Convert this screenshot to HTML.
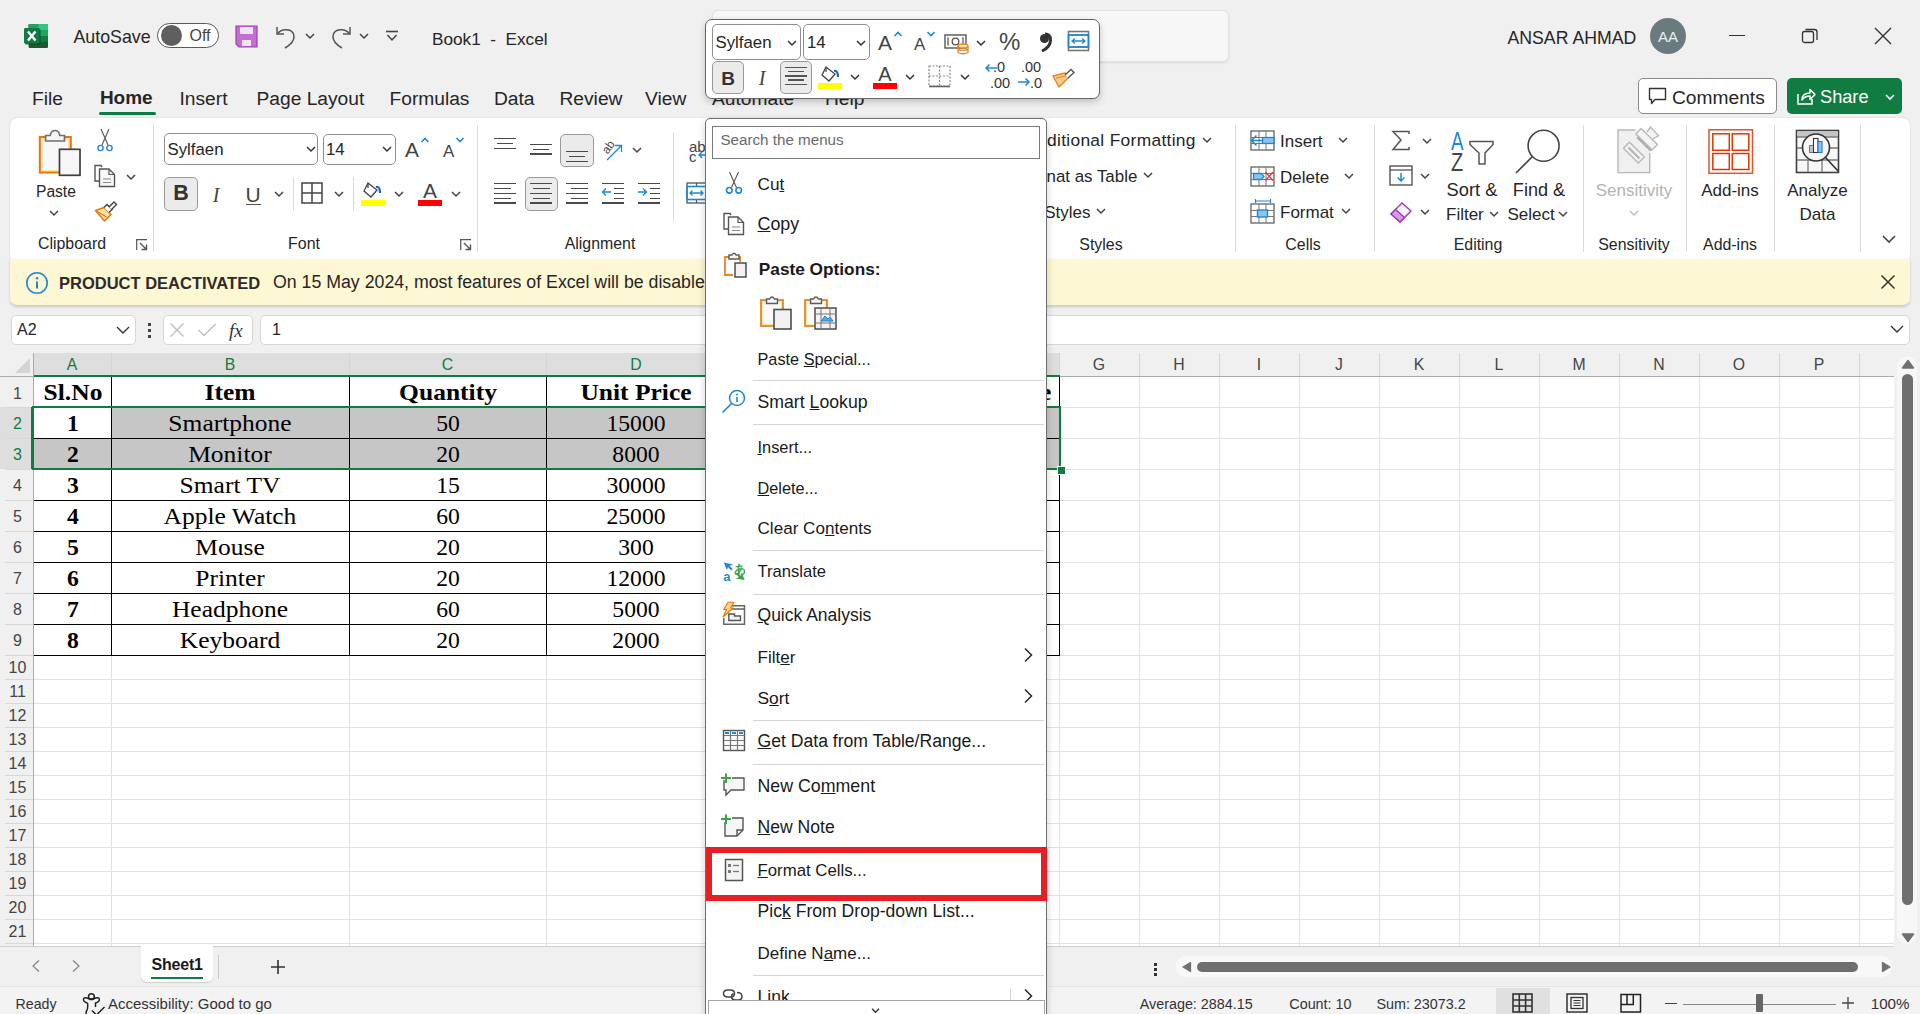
<!DOCTYPE html><html><head><meta charset="utf-8"><style>
html,body{margin:0;padding:0;width:1920px;height:1014px;overflow:hidden;background:#f0f0f0;}
body{position:relative;font-family:"Liberation Sans",sans-serif;}
</style></head><body><div style="position:absolute;left:0px;top:0px;width:1920px;height:1014px;background:#f0f0f0;"></div>
<svg style="position:absolute;left:24px;top:24px;" width="25" height="25" viewBox="0 0 25 25" fill="none">
      <rect x="4.6" y="0" width="19.4" height="24" rx="1.2" fill="#185c37"/>
      <rect x="4.6" y="0" width="19.4" height="6" fill="#21a366"/>
      <rect x="14.4" y="0" width="9.6" height="6" fill="#33c481"/>
      <rect x="4.6" y="6" width="19.4" height="6" fill="#21a366"/>
      <rect x="4.6" y="12" width="19.4" height="6" fill="#107c41"/>
      <rect x="1" y="5" width="15.5" height="15.5" rx="1.3" fill="#0b3d22" opacity="0.75"/>
      <rect x="0" y="4" width="15.5" height="15.5" rx="1.3" fill="#107c41"/>
      <path d="M4 7.5 L11.5 16.5 M11.5 7.5 L4 16.5" stroke="#fff" stroke-width="2.4"/>
    </svg>
<div style="position:absolute;top:28.93px;font-size:17.8px;line-height:1;color:#262626;font-weight:400;font-family:'Liberation Sans', sans-serif;white-space:pre;left:73.5px;">AutoSave</div>
<div style="position:absolute;left:157px;top:23px;width:62px;height:25px;box-sizing:border-box;border:1.3px solid #5a5a5a;border-radius:13px;background:#fff;"></div>
<div style="position:absolute;left:161px;top:25px;width:21px;height:21px;border-radius:50%;background:#5f5f5f;"></div>
<div style="position:absolute;top:28.16px;font-size:16px;line-height:1;color:#444;font-weight:400;font-family:'Liberation Sans', sans-serif;white-space:pre;left:189.5px;">Off</div>
<svg style="position:absolute;left:235px;top:25px;" width="24" height="23" viewBox="0 0 24 23" fill="none">
      <path d="M1 1 H22 V22 H4 L1 19 Z" fill="#c26fd3" stroke="#9c3fb0" stroke-width="1.2"/>
      <rect x="5" y="2" width="13" height="7" fill="#f3e1f7"/>
      <rect x="7" y="15" width="9" height="6" fill="#f3e1f7"/>
    </svg>
<svg style="position:absolute;left:274px;top:24px;" width="24" height="25" viewBox="0 0 24 25" fill="none"><path d="M3 3 V10 H10" stroke="#555" stroke-width="1.5"/><path d="M3.5 10 C7 4 19 4 20 12 C20.5 17 16 21 11 24" stroke="#555" stroke-width="1.5"/></svg>
<svg style="position:absolute;left:304px;top:32px;" width="12" height="8" viewBox="0 0 12 8" fill="none"><path d="M2 2.0 L6 6.0 L10 2.0" stroke="#444" stroke-width="1.5"/></svg>
<svg style="position:absolute;left:329px;top:24px;" width="24" height="25" viewBox="0 0 24 25" fill="none"><path d="M21 3 V10 H14" stroke="#555" stroke-width="1.5"/><path d="M20.5 10 C17 4 5 4 4 12 C3.5 17 8 21 13 24" stroke="#555" stroke-width="1.5"/></svg>
<svg style="position:absolute;left:358px;top:32px;" width="12" height="8" viewBox="0 0 12 8" fill="none"><path d="M2 2.0 L6 6.0 L10 2.0" stroke="#444" stroke-width="1.5"/></svg>
<svg style="position:absolute;left:385px;top:30px;" width="14" height="13" viewBox="0 0 14 13" fill="none"><path d="M1 1.5 H13" stroke="#444" stroke-width="1.6"/><path d="M2.5 5 L7 10 L11.5 5" stroke="#444" stroke-width="1.5"/></svg>
<div style="position:absolute;top:30.64px;font-size:17.2px;line-height:1;color:#262626;font-weight:400;font-family:'Liberation Sans', sans-serif;white-space:pre;left:432px;">Book1  -  Excel</div>
<div style="position:absolute;top:29.52px;font-size:17.7px;line-height:1;color:#262626;font-weight:400;font-family:'Liberation Sans', sans-serif;white-space:pre;left:1507.5px;">ANSAR AHMAD</div>
<div style="position:absolute;left:1650px;top:18px;width:36px;height:36px;border-radius:50%;background:#6a7b80;"></div>
<div style="position:absolute;top:29.30px;font-size:15px;line-height:1;color:#e8eef0;font-weight:400;font-family:'Liberation Sans', sans-serif;white-space:pre;left:1650.00px;width:36px;text-align:center;">AA</div>
<div style="position:absolute;left:1729px;top:35px;width:16px;height:1.3px;background:#333;"></div>
<svg style="position:absolute;left:1800px;top:26px;" width="20" height="20" viewBox="0 0 20 20" fill="none"><rect x="2.5" y="5.5" width="11" height="11" rx="2" stroke="#333" stroke-width="1.3"/><path d="M5.5 3.5 H14.5 Q17 3.5 17 6 V14" stroke="#333" stroke-width="1.3"/></svg>
<svg style="position:absolute;left:1873px;top:26px;" width="20" height="20" viewBox="0 0 20 20" fill="none"><path d="M2 2 L18 18 M18 2 L2 18" stroke="#333" stroke-width="1.4"/></svg>
<div style="position:absolute;top:89.35px;font-size:19.2px;line-height:1;color:#262626;font-weight:400;font-family:'Liberation Sans', sans-serif;white-space:pre;left:32px;">File</div>
<div style="position:absolute;top:89.35px;font-size:19.2px;line-height:1;color:#262626;font-weight:400;font-family:'Liberation Sans', sans-serif;white-space:pre;left:179.5px;">Insert</div>
<div style="position:absolute;top:89.35px;font-size:19.2px;line-height:1;color:#262626;font-weight:400;font-family:'Liberation Sans', sans-serif;white-space:pre;left:256.5px;">Page Layout</div>
<div style="position:absolute;top:89.35px;font-size:19.2px;line-height:1;color:#262626;font-weight:400;font-family:'Liberation Sans', sans-serif;white-space:pre;left:389.5px;">Formulas</div>
<div style="position:absolute;top:89.35px;font-size:19.2px;line-height:1;color:#262626;font-weight:400;font-family:'Liberation Sans', sans-serif;white-space:pre;left:494px;">Data</div>
<div style="position:absolute;top:89.35px;font-size:19.2px;line-height:1;color:#262626;font-weight:400;font-family:'Liberation Sans', sans-serif;white-space:pre;left:559.5px;">Review</div>
<div style="position:absolute;top:89.35px;font-size:19.2px;line-height:1;color:#262626;font-weight:400;font-family:'Liberation Sans', sans-serif;white-space:pre;left:645px;">View</div>
<div style="position:absolute;top:89.35px;font-size:19.2px;line-height:1;color:#262626;font-weight:400;font-family:'Liberation Sans', sans-serif;white-space:pre;left:712px;">Automate</div>
<div style="position:absolute;top:89.35px;font-size:19.2px;line-height:1;color:#262626;font-weight:400;font-family:'Liberation Sans', sans-serif;white-space:pre;left:825px;">Help</div>
<div style="position:absolute;top:88.42px;font-size:19px;line-height:1;color:#262626;font-weight:700;font-family:'Liberation Sans', sans-serif;white-space:pre;letter-spacing:-0.1px;left:100px;">Home</div>
<div style="position:absolute;left:99px;top:112px;width:57px;height:3px;background:#107c41;border-radius:2px;"></div>
<div style="position:absolute;left:1638px;top:78px;width:139px;height:36px;box-sizing:border-box;border:1px solid #8a8a8a;border-radius:5px;background:#fff;"></div>
<svg style="position:absolute;left:1648px;top:87px;" width="20" height="18" viewBox="0 0 20 18" fill="none"><path d="M1.5 1.5 H17.5 V12.5 H7 L3.5 16.5 V12.5 H1.5 Z" stroke="#333" stroke-width="1.4" stroke-linejoin="round"/></svg>
<div style="position:absolute;top:87.95px;font-size:19.2px;line-height:1;color:#262626;font-weight:400;font-family:'Liberation Sans', sans-serif;white-space:pre;left:1672px;">Comments</div>
<div style="position:absolute;left:1787px;top:78px;width:115px;height:36px;border-radius:5px;background:#107c41;"></div>
<svg style="position:absolute;left:1796px;top:86px;" width="20" height="20" viewBox="0 0 20 20" fill="none"><path d="M2 8 V18 H16 V13" stroke="#fff" stroke-width="1.5"/><path d="M6 14 C6 9 9 7 14 7 V3.5 L19 8.5 L14 13.5 V10 C10 10 8 11 6 14 Z" stroke="#fff" stroke-width="1.5" stroke-linejoin="round"/></svg>
<div style="position:absolute;top:88.09px;font-size:18.2px;line-height:1;color:#ffffff;font-weight:400;font-family:'Liberation Sans', sans-serif;white-space:pre;left:1820px;">Share</div>
<svg style="position:absolute;left:1884px;top:93px;" width="12" height="8" viewBox="0 0 12 8" fill="none"><path d="M2 2.0 L6 6.0 L10 2.0" stroke="#fff" stroke-width="1.6"/></svg>
<div style="position:absolute;left:10px;top:118px;width:1900px;height:145px;background:#fff;border-radius:8px;box-shadow:0 0.5px 1.5px rgba(0,0,0,0.18);"></div>
<div style="position:absolute;left:10px;top:259px;width:1900px;height:46px;background:#fdf7d4;border-radius:0 0 7px 7px;box-shadow:0 1.5px 3px rgba(0,0,0,0.16);"></div>
<svg style="position:absolute;left:36px;top:128px;" width="46" height="50" viewBox="0 0 46 50" fill="none"><rect x="3.8" y="9" width="31" height="35.5" fill="#fbe3a6" stroke="#e8760e" stroke-width="2"/>
      <rect x="6.5" y="11.5" width="25.5" height="30.5" fill="#f8f8f8"/>
      <path d="M9.6 13 V7.5 H14.2 Q15 2.5 19 2.5 Q23 2.5 23.8 7.5 H28.5 V13 Z" fill="#f4f4f4" stroke="#707070" stroke-width="1.7"/>
      <rect x="23.5" y="21.3" width="20.5" height="26" fill="#f7f7f7" stroke="#404040" stroke-width="1.7"/></svg>
<div style="position:absolute;top:183.79px;font-size:15.6px;line-height:1;color:#262626;font-weight:400;font-family:'Liberation Sans', sans-serif;white-space:pre;left:36px;">Paste</div>
<svg style="position:absolute;left:48px;top:209px;" width="12" height="8" viewBox="0 0 12 8" fill="none"><path d="M2 2.0 L6 6.0 L10 2.0" stroke="#444" stroke-width="1.5"/></svg>
<svg style="position:absolute;left:96px;top:128px;" width="18" height="25" viewBox="0 0 18 25" fill="none"><path d="M5 1 L12 17 M13 1 L6 17" stroke="#555" stroke-width="1.1"/>
      <circle cx="4.5" cy="20" r="2.6" stroke="#1e88d4" stroke-width="1.4"/><circle cx="13.5" cy="20" r="2.6" stroke="#1e88d4" stroke-width="1.4"/></svg>
<svg style="position:absolute;left:93px;top:164px;" width="24" height="24" viewBox="0 0 24 24" fill="none"><path d="M9 3 L8 1.5 H2 V17 H6" stroke="#555" stroke-width="1.4"/>
      <path d="M6.5 5 H16 L21.5 10.5 V22.5 H6.5 Z" fill="#fafafa" stroke="#555" stroke-width="1.4"/>
      <path d="M16 5 V10.5 H21.5" stroke="#555" stroke-width="1.2"/>
      <path d="M10 15 H18 M10 18.5 H18" stroke="#888" stroke-width="1.2"/></svg>
<svg style="position:absolute;left:125px;top:173px;" width="12" height="8" viewBox="0 0 12 8" fill="none"><path d="M2 2.0 L6 6.0 L10 2.0" stroke="#444" stroke-width="1.5"/></svg>
<svg style="position:absolute;left:94px;top:201px;" width="24" height="22" viewBox="0 0 24 22" fill="none"><path d="M1.5 9.5 L10 6.5 L17 13.5 L10.5 20 Z" fill="#fbe3a6" stroke="#e8760e" stroke-width="1.5" stroke-linejoin="round"/>
      <path d="M1.5 9.5 L12.5 16" stroke="#e8760e" stroke-width="1.2"/>
      <path d="M10 6.5 L13 3.5 L18 8.5 L15 11.5" fill="#fff" stroke="#404040" stroke-width="1.4"/>
      <path d="M15 6 L20 1 L22.5 3.5 L17.5 8.5" fill="#fff" stroke="#404040" stroke-width="1.4"/></svg>
<div style="position:absolute;top:236.24px;font-size:15.9px;line-height:1;color:#262626;font-weight:400;font-family:'Liberation Sans', sans-serif;white-space:pre;left:38px;">Clipboard</div>
<svg style="position:absolute;left:136px;top:239px;" width="12" height="12" viewBox="0 0 12 12" fill="none"><path d="M0.7 11 V0.7 H11" stroke="#555" stroke-width="1.2"/><path d="M4 4 L10.5 10.5 M10.5 5.5 V10.5 H5.5" stroke="#555" stroke-width="1.4"/></svg>
<div style="position:absolute;left:153px;top:125px;width:1px;height:127px;background:#dcdcdc;"></div>
<div style="position:absolute;left:164px;top:133px;width:154px;height:32px;box-sizing:border-box;border:1px solid #8f8f8f;border-radius:5px;background:#fff;"></div>
<div style="position:absolute;top:141.58px;font-size:16.8px;line-height:1;color:#262626;font-weight:400;font-family:'Liberation Sans', sans-serif;white-space:pre;left:167.5px;">Sylfaen</div>
<svg style="position:absolute;left:304.5px;top:145px;" width="12" height="8" viewBox="0 0 12 8" fill="none"><path d="M2 2.0 L6 6.0 L10 2.0" stroke="#333" stroke-width="1.5"/></svg>
<div style="position:absolute;left:322.5px;top:133.5px;width:73px;height:31.5px;box-sizing:border-box;border:1px solid #8f8f8f;border-radius:5px;background:#fff;"></div>
<div style="position:absolute;top:141.58px;font-size:16.8px;line-height:1;color:#262626;font-weight:400;font-family:'Liberation Sans', sans-serif;white-space:pre;left:326px;">14</div>
<svg style="position:absolute;left:380.5px;top:145px;" width="12" height="8" viewBox="0 0 12 8" fill="none"><path d="M2 2.0 L6 6.0 L10 2.0" stroke="#333" stroke-width="1.5"/></svg>
<div style="position:absolute;top:139.22px;font-size:21px;line-height:1;color:#444;font-weight:400;font-family:'Liberation Sans', sans-serif;white-space:pre;left:405px;">A</div>
<svg style="position:absolute;left:420px;top:136px;" width="10" height="8" viewBox="0 0 10 8" fill="none"><path d="M1.5 6 L5 2.5 L8.5 6" stroke="#1e88d4" stroke-width="1.6"/></svg>
<div style="position:absolute;top:142.61px;font-size:17px;line-height:1;color:#444;font-weight:400;font-family:'Liberation Sans', sans-serif;white-space:pre;left:443px;">A</div>
<svg style="position:absolute;left:455px;top:136px;" width="10" height="8" viewBox="0 0 10 8" fill="none"><path d="M1.5 2 L5 5.5 L8.5 2" stroke="#1e88d4" stroke-width="1.6"/></svg>
<div style="position:absolute;left:164px;top:177px;width:34px;height:33.5px;box-sizing:border-box;border:1px solid #9a9a9a;border-radius:5px;background:#ebebeb;"></div>
<div style="position:absolute;top:183.30px;font-size:21.5px;line-height:1;color:#333;font-weight:700;font-family:'Liberation Sans', sans-serif;white-space:pre;left:164.00px;width:34px;text-align:center;">B</div>
<div style="position:absolute;top:185.25px;font-size:20px;line-height:1;color:#444;font-weight:400;font-family:'Liberation Serif', serif;white-space:pre;font-style:italic;left:206.00px;width:20px;text-align:center;">I</div>
<div style="position:absolute;top:184.22px;font-size:21px;line-height:1;color:#444;font-weight:400;font-family:'Liberation Sans', sans-serif;white-space:pre;left:243.00px;width:20px;text-align:center;">U</div>
<div style="position:absolute;left:246px;top:203.8px;width:14.5px;height:1.5px;background:#555;"></div>
<svg style="position:absolute;left:273px;top:190px;" width="12" height="8" viewBox="0 0 12 8" fill="none"><path d="M2 2.0 L6 6.0 L10 2.0" stroke="#444" stroke-width="1.5"/></svg>
<div style="position:absolute;left:293px;top:177px;width:1px;height:34px;background:#dcdcdc;"></div>
<svg style="position:absolute;left:301px;top:182px;" width="22" height="23" viewBox="0 0 22 23" fill="none"><rect x="1" y="1" width="20" height="20" stroke="#444" stroke-width="1.5"/><path d="M11 1 V21 M1 11 H21" stroke="#444" stroke-width="1.5"/></svg>
<svg style="position:absolute;left:333px;top:190px;" width="12" height="8" viewBox="0 0 12 8" fill="none"><path d="M2 2.0 L6 6.0 L10 2.0" stroke="#444" stroke-width="1.5"/></svg>
<div style="position:absolute;left:353px;top:177px;width:1px;height:34px;background:#dcdcdc;"></div>
<svg style="position:absolute;left:360px;top:180px;" width="26" height="26" viewBox="0 0 26 26" fill="none"><path d="M8 3 L4 11 L11 17 L17 10 Z" fill="#fff" stroke="#444" stroke-width="1.3"/>
      <path d="M8 3 V8" stroke="#444" stroke-width="1.3"/><path d="M16 7 Q20 6 20 13" stroke="#1e66b8" stroke-width="2.2"/></svg>
<div style="position:absolute;left:361px;top:200px;width:24px;height:5.5px;background:#ffff00;"></div>
<svg style="position:absolute;left:393px;top:190px;" width="12" height="8" viewBox="0 0 12 8" fill="none"><path d="M2 2.0 L6 6.0 L10 2.0" stroke="#444" stroke-width="1.5"/></svg>
<div style="position:absolute;top:179.72px;font-size:21px;line-height:1;color:#444;font-weight:400;font-family:'Liberation Sans', sans-serif;white-space:pre;left:418.00px;width:24px;text-align:center;">A</div>
<div style="position:absolute;left:418px;top:200px;width:24px;height:5.5px;background:#ff0000;"></div>
<svg style="position:absolute;left:450px;top:190px;" width="12" height="8" viewBox="0 0 12 8" fill="none"><path d="M2 2.0 L6 6.0 L10 2.0" stroke="#444" stroke-width="1.5"/></svg>
<div style="position:absolute;top:236.04px;font-size:15.9px;line-height:1;color:#262626;font-weight:400;font-family:'Liberation Sans', sans-serif;white-space:pre;left:274.00px;width:60px;text-align:center;">Font</div>
<svg style="position:absolute;left:460px;top:239px;" width="12" height="12" viewBox="0 0 12 12" fill="none"><path d="M0.7 11 V0.7 H11" stroke="#555" stroke-width="1.2"/><path d="M4 4 L10.5 10.5 M10.5 5.5 V10.5 H5.5" stroke="#555" stroke-width="1.4"/></svg>
<div style="position:absolute;left:477px;top:125px;width:1px;height:127px;background:#dcdcdc;"></div>
<div style="position:absolute;left:494px;top:138px;width:22px;height:1.3px;background:#4a4a4a;"></div>
<div style="position:absolute;left:497px;top:142.8px;width:16px;height:1.3px;background:#4a4a4a;"></div>
<div style="position:absolute;left:494px;top:147.6px;width:22px;height:1.3px;background:#4a4a4a;"></div>
<div style="position:absolute;left:530px;top:143.8px;width:22px;height:1.3px;background:#4a4a4a;"></div>
<div style="position:absolute;left:533px;top:148.60000000000002px;width:16px;height:1.3px;background:#4a4a4a;"></div>
<div style="position:absolute;left:530px;top:153.4px;width:22px;height:1.3px;background:#4a4a4a;"></div>
<div style="position:absolute;left:560px;top:133.5px;width:34px;height:33px;box-sizing:border-box;border:1px solid #9a9a9a;border-radius:5px;background:#ebebeb;"></div>
<div style="position:absolute;left:566px;top:151.2px;width:22px;height:1.3px;background:#4a4a4a;"></div>
<div style="position:absolute;left:569px;top:156.0px;width:16px;height:1.3px;background:#4a4a4a;"></div>
<div style="position:absolute;left:566px;top:160.79999999999998px;width:22px;height:1.3px;background:#4a4a4a;"></div>
<svg style="position:absolute;left:601px;top:136px;" width="25" height="26" viewBox="0 0 25 26" fill="none"><text x="0" y="14" font-family="Liberation Sans" font-size="12" fill="#444" transform="rotate(-55 8 10)">ab</text>
      <path d="M6 24 L20 10 M14 9.5 H20.5 V16" stroke="#1e88d4" stroke-width="1.3"/></svg>
<svg style="position:absolute;left:631px;top:146px;" width="12" height="8" viewBox="0 0 12 8" fill="none"><path d="M2 2.0 L6 6.0 L10 2.0" stroke="#444" stroke-width="1.5"/></svg>
<div style="position:absolute;left:494px;top:183.2px;width:22px;height:1.3px;background:#4a4a4a;"></div>
<div style="position:absolute;left:494px;top:188.0px;width:17px;height:1.3px;background:#4a4a4a;"></div>
<div style="position:absolute;left:494px;top:192.79999999999998px;width:22px;height:1.3px;background:#4a4a4a;"></div>
<div style="position:absolute;left:494px;top:197.6px;width:17px;height:1.3px;background:#4a4a4a;"></div>
<div style="position:absolute;left:494px;top:202.39999999999998px;width:22px;height:1.3px;background:#4a4a4a;"></div>
<div style="position:absolute;left:524.5px;top:177px;width:33px;height:33.5px;box-sizing:border-box;border:1px solid #9a9a9a;border-radius:5px;background:#ebebeb;"></div>
<div style="position:absolute;left:530px;top:183.2px;width:22px;height:1.3px;background:#4a4a4a;"></div>
<div style="position:absolute;left:532.5px;top:188.0px;width:17px;height:1.3px;background:#4a4a4a;"></div>
<div style="position:absolute;left:530px;top:192.79999999999998px;width:22px;height:1.3px;background:#4a4a4a;"></div>
<div style="position:absolute;left:532.5px;top:197.6px;width:17px;height:1.3px;background:#4a4a4a;"></div>
<div style="position:absolute;left:530px;top:202.39999999999998px;width:22px;height:1.3px;background:#4a4a4a;"></div>
<div style="position:absolute;left:566px;top:183.2px;width:22px;height:1.3px;background:#4a4a4a;"></div>
<div style="position:absolute;left:571px;top:188.0px;width:17px;height:1.3px;background:#4a4a4a;"></div>
<div style="position:absolute;left:566px;top:192.79999999999998px;width:22px;height:1.3px;background:#4a4a4a;"></div>
<div style="position:absolute;left:571px;top:197.6px;width:17px;height:1.3px;background:#4a4a4a;"></div>
<div style="position:absolute;left:566px;top:202.39999999999998px;width:22px;height:1.3px;background:#4a4a4a;"></div>
<div style="position:absolute;left:602px;top:183.2px;width:22px;height:1.3px;background:#4a4a4a;"></div>
<div style="position:absolute;left:614px;top:188.0px;width:10px;height:1.3px;background:#4a4a4a;"></div>
<div style="position:absolute;left:614px;top:192.79999999999998px;width:10px;height:1.3px;background:#4a4a4a;"></div>
<div style="position:absolute;left:614px;top:197.6px;width:10px;height:1.3px;background:#4a4a4a;"></div>
<div style="position:absolute;left:602px;top:202.39999999999998px;width:22px;height:1.3px;background:#4a4a4a;"></div>
<svg style="position:absolute;left:601px;top:186px;" width="11" height="12" viewBox="0 0 11 12" fill="none"><path d="M10 6 H1.5 M5 2.5 L1.5 6 L5 9.5" stroke="#1e88d4" stroke-width="1.4"/></svg>
<div style="position:absolute;left:638px;top:183.2px;width:22px;height:1.3px;background:#4a4a4a;"></div>
<div style="position:absolute;left:650px;top:188.0px;width:10px;height:1.3px;background:#4a4a4a;"></div>
<div style="position:absolute;left:650px;top:192.79999999999998px;width:10px;height:1.3px;background:#4a4a4a;"></div>
<div style="position:absolute;left:650px;top:197.6px;width:10px;height:1.3px;background:#4a4a4a;"></div>
<div style="position:absolute;left:638px;top:202.39999999999998px;width:22px;height:1.3px;background:#4a4a4a;"></div>
<svg style="position:absolute;left:637px;top:186px;" width="11" height="12" viewBox="0 0 11 12" fill="none"><path d="M1 6 H9.5 M6 2.5 L9.5 6 L6 9.5" stroke="#1e88d4" stroke-width="1.4"/></svg>
<div style="position:absolute;left:673px;top:132px;width:1px;height:90px;background:#dcdcdc;"></div>
<div style="position:absolute;top:138.80px;font-size:15px;line-height:1;color:#444;font-weight:400;font-family:'Liberation Sans', sans-serif;white-space:pre;left:689px;">ab</div>
<div style="position:absolute;top:148.80px;font-size:15px;line-height:1;color:#444;font-weight:400;font-family:'Liberation Sans', sans-serif;white-space:pre;left:689px;">c</div>
<svg style="position:absolute;left:697px;top:150px;" width="12" height="10" viewBox="0 0 12 10" fill="none"><path d="M11 5 H2 M5 2 L2 5 L5 8" stroke="#1e88d4" stroke-width="1.3"/></svg>
<svg style="position:absolute;left:686px;top:182px;" width="22" height="23" viewBox="0 0 22 23" fill="none"><rect x="1" y="1" width="22" height="20" stroke="#555" stroke-width="1.3"/>
      <path d="M10.5 1 V4 M10.5 18 V21" stroke="#555" stroke-width="1.2"/>
      <rect x="1" y="4.5" width="22" height="13" stroke="#1e88d4" stroke-width="1.6"/>
      <path d="M4 11 H17 M6.5 8.5 L4 11 L6.5 13.5 M14.5 8.5 L17 11 L14.5 13.5" stroke="#1e88d4" stroke-width="1.3"/></svg>
<div style="position:absolute;top:236.04px;font-size:15.9px;line-height:1;color:#262626;font-weight:400;font-family:'Liberation Sans', sans-serif;white-space:pre;left:555.00px;width:90px;text-align:center;">Alignment</div>
<div style="position:absolute;top:132.27px;font-size:17.4px;line-height:1;color:#262626;font-weight:400;font-family:'Liberation Sans', sans-serif;white-space:pre;letter-spacing:0.3px;left:1047px;">ditional Formatting</div>
<svg style="position:absolute;left:1201px;top:136px;" width="12" height="8" viewBox="0 0 12 8" fill="none"><path d="M2 2.0 L6 6.0 L10 2.0" stroke="#444" stroke-width="1.5"/></svg>
<div style="position:absolute;top:168.59px;font-size:16.9px;line-height:1;color:#262626;font-weight:400;font-family:'Liberation Sans', sans-serif;white-space:pre;left:1046.5px;">nat as Table</div>
<svg style="position:absolute;left:1141.5px;top:171px;" width="12" height="8" viewBox="0 0 12 8" fill="none"><path d="M2 2.0 L6 6.0 L10 2.0" stroke="#444" stroke-width="1.5"/></svg>
<div style="position:absolute;top:204.41px;font-size:17px;line-height:1;color:#262626;font-weight:400;font-family:'Liberation Sans', sans-serif;white-space:pre;left:890.50px;width:200px;text-align:right;">Cell Styles</div>
<svg style="position:absolute;left:1095px;top:207px;" width="12" height="8" viewBox="0 0 12 8" fill="none"><path d="M2 2.0 L6 6.0 L10 2.0" stroke="#444" stroke-width="1.5"/></svg>
<div style="position:absolute;top:236.84px;font-size:15.9px;line-height:1;color:#262626;font-weight:400;font-family:'Liberation Sans', sans-serif;white-space:pre;left:1071.00px;width:60px;text-align:center;">Styles</div>
<div style="position:absolute;left:1234.7px;top:125px;width:1px;height:127px;background:#dcdcdc;"></div>
<svg style="position:absolute;left:1250px;top:130px;" width="25" height="21" viewBox="0 0 25 21" fill="none"><rect x="1" y="1" width="23" height="19" stroke="#555" stroke-width="1.2"/><path d="M9 1 V20 M16 1 V20 M1 7.5 H24 M1 13.5 H24" stroke="#777" stroke-width="1"/><rect x="12.5" y="7.5" width="11.5" height="6" fill="#8cc4f0" stroke="#1e88d4" stroke-width="1.3"/><path d="M1.5 10.5 H13 M6.5 5.5 L1.5 10.5 L6.5 15.5" stroke="#1e88d4" stroke-width="1.5"/></svg>
<div style="position:absolute;top:132.61px;font-size:17px;line-height:1;color:#262626;font-weight:400;font-family:'Liberation Sans', sans-serif;white-space:pre;left:1280px;">Insert</div>
<svg style="position:absolute;left:1337px;top:136px;" width="12" height="8" viewBox="0 0 12 8" fill="none"><path d="M2 2.0 L6 6.0 L10 2.0" stroke="#444" stroke-width="1.5"/></svg>
<svg style="position:absolute;left:1250px;top:165.5px;" width="25" height="21" viewBox="0 0 25 21" fill="none"><rect x="1" y="1" width="23" height="19" stroke="#555" stroke-width="1.2"/><path d="M9 1 V20 M16 1 V20 M1 7.5 H24 M1 13.5 H24" stroke="#777" stroke-width="1"/><path d="M3.5 7.5 H11.5 L14 10.5 L11.5 13.5 H3.5 Z" fill="#8cc4f0" stroke="#1e88d4" stroke-width="1.3"/><path d="M15.5 6 L23 14.5 M23 6 L15.5 14.5" stroke="#e8362b" stroke-width="1.3"/></svg>
<div style="position:absolute;top:168.51px;font-size:17px;line-height:1;color:#262626;font-weight:400;font-family:'Liberation Sans', sans-serif;white-space:pre;left:1280px;">Delete</div>
<svg style="position:absolute;left:1343px;top:172px;" width="12" height="8" viewBox="0 0 12 8" fill="none"><path d="M2 2.0 L6 6.0 L10 2.0" stroke="#444" stroke-width="1.5"/></svg>
<svg style="position:absolute;left:1250px;top:202.5px;" width="25" height="21" viewBox="0 0 25 21" fill="none"><rect x="1" y="1" width="23" height="19" stroke="#555" stroke-width="1.2"/><path d="M9 1 V20 M16 1 V20 M1 7.5 H24 M1 13.5 H24" stroke="#777" stroke-width="1"/><rect x="7.5" y="7" width="10" height="7" fill="#8cc4f0" stroke="#1e88d4" stroke-width="1.4"/></svg>
<svg style="position:absolute;left:1254px;top:199px;" width="18" height="5" viewBox="0 0 18 5" fill="none"><path d="M1 2 H17 M1.5 0 V4 M16.5 0 V4" stroke="#1e88d4" stroke-width="1.2"/></svg>
<div style="position:absolute;top:204.41px;font-size:17px;line-height:1;color:#262626;font-weight:400;font-family:'Liberation Sans', sans-serif;white-space:pre;left:1280px;">Format</div>
<svg style="position:absolute;left:1340px;top:207px;" width="12" height="8" viewBox="0 0 12 8" fill="none"><path d="M2 2.0 L6 6.0 L10 2.0" stroke="#444" stroke-width="1.5"/></svg>
<div style="position:absolute;top:236.84px;font-size:15.9px;line-height:1;color:#262626;font-weight:400;font-family:'Liberation Sans', sans-serif;white-space:pre;left:1273.00px;width:60px;text-align:center;">Cells</div>
<div style="position:absolute;left:1373.6px;top:125px;width:1px;height:127px;background:#dcdcdc;"></div>
<svg style="position:absolute;left:1391px;top:130px;" width="20" height="21" viewBox="0 0 20 21" fill="none"><path d="M18 4 V1.5 H2 L10 10 L2 19.5 H18 V17" stroke="#555" stroke-width="1.5"/></svg>
<svg style="position:absolute;left:1421px;top:137px;" width="12" height="8" viewBox="0 0 12 8" fill="none"><path d="M2 2.0 L6 6.0 L10 2.0" stroke="#444" stroke-width="1.5"/></svg>
<svg style="position:absolute;left:1389px;top:165px;" width="24" height="22" viewBox="0 0 24 22" fill="none"><rect x="1" y="1" width="22" height="19" stroke="#555" stroke-width="1.4"/><path d="M1 5 H23" stroke="#555" stroke-width="1.3"/><path d="M12 8 V16 M8.5 12.5 L12 16 L15.5 12.5" stroke="#1e88d4" stroke-width="1.5"/></svg>
<svg style="position:absolute;left:1419px;top:172px;" width="12" height="8" viewBox="0 0 12 8" fill="none"><path d="M2 2.0 L6 6.0 L10 2.0" stroke="#444" stroke-width="1.5"/></svg>
<svg style="position:absolute;left:1389px;top:200px;" width="24" height="24" viewBox="0 0 24 24" fill="none"><path d="M2 14 L13 3 L22 11 L11 22 Z" fill="#f3f3f3" stroke="#a238b8" stroke-width="1.4"/><path d="M2 14 L6.5 9.5 L15.5 17.5 L11 22 Z" fill="#d79be3" stroke="#a238b8" stroke-width="1.4"/></svg>
<svg style="position:absolute;left:1419px;top:208px;" width="12" height="8" viewBox="0 0 12 8" fill="none"><path d="M2 2.0 L6 6.0 L10 2.0" stroke="#444" stroke-width="1.5"/></svg>
<div style="position:absolute;top:129.34px;font-size:25px;line-height:1;color:#1e88d4;font-weight:400;font-family:'Liberation Sans', sans-serif;white-space:pre;transform:scaleX(0.75);transform-origin:0 0;left:1450.5px;">A</div>
<div style="position:absolute;top:150.34px;font-size:25px;line-height:1;color:#444;font-weight:400;font-family:'Liberation Sans', sans-serif;white-space:pre;transform:scaleX(0.8);transform-origin:0 0;left:1451px;">Z</div>
<svg style="position:absolute;left:1469px;top:140px;" width="26" height="26" viewBox="0 0 26 26" fill="none"><path d="M1 1.5 H24 V4.5 L16 13 V24 H10 V13 L1 4.5 Z" stroke="#555" stroke-width="1.5"/></svg>
<div style="position:absolute;top:181.31px;font-size:18.3px;line-height:1;color:#262626;font-weight:400;font-family:'Liberation Sans', sans-serif;white-space:pre;left:1442.00px;width:60px;text-align:center;">Sort &amp;</div>
<div style="position:absolute;top:206.11px;font-size:17px;line-height:1;color:#262626;font-weight:400;font-family:'Liberation Sans', sans-serif;white-space:pre;left:1446px;">Filter</div>
<svg style="position:absolute;left:1487.5px;top:210px;" width="12" height="8" viewBox="0 0 12 8" fill="none"><path d="M2 2.0 L6 6.0 L10 2.0" stroke="#444" stroke-width="1.5"/></svg>
<svg style="position:absolute;left:1512px;top:127px;" width="50" height="50" viewBox="0 0 50 50" fill="none"><circle cx="31.6" cy="18.8" r="15.5" stroke="#444" stroke-width="1.6"/><path d="M20.5 29.5 L4 46" stroke="#444" stroke-width="1.6"/></svg>
<div style="position:absolute;top:181.48px;font-size:18.1px;line-height:1;color:#262626;font-weight:400;font-family:'Liberation Sans', sans-serif;white-space:pre;left:1509.00px;width:60px;text-align:center;">Find &amp;</div>
<div style="position:absolute;top:206.11px;font-size:17px;line-height:1;color:#262626;font-weight:400;font-family:'Liberation Sans', sans-serif;white-space:pre;left:1507.5px;">Select</div>
<svg style="position:absolute;left:1557px;top:210px;" width="12" height="8" viewBox="0 0 12 8" fill="none"><path d="M2 2.0 L6 6.0 L10 2.0" stroke="#444" stroke-width="1.5"/></svg>
<div style="position:absolute;top:237.14px;font-size:15.9px;line-height:1;color:#262626;font-weight:400;font-family:'Liberation Sans', sans-serif;white-space:pre;left:1448.00px;width:60px;text-align:center;">Editing</div>
<div style="position:absolute;left:1582.6px;top:125px;width:1px;height:127px;background:#dcdcdc;"></div>
<svg style="position:absolute;left:1616px;top:126px;" width="46" height="49" viewBox="0 0 46 49" fill="none"><path d="M2 4 H19.5 L33.7 18 V46.6 H2 Z" fill="#f0f0f0"/>
      <path d="M19.5 4 H2 V46.6 H33.7 V27" stroke="#b8b8b8" stroke-width="1.4"/>
      <path d="M7.5 22.3 L13.5 16.3 L28.3 31 L22.3 37 Z" fill="#f3f3f3" stroke="#b8b8b8" stroke-width="1.4"/>
      <path d="M12.5 21.5 L23.5 32.5" stroke="#b4b4b4" stroke-width="2.2"/>
      <path d="M20 8 L25 2.5 L41.5 18.5 L36 24 Z" fill="#f3f3f3" stroke="#b8b8b8" stroke-width="1.4"/>
      <path d="M21.3 11 L35 24.7" stroke="#b0b0b0" stroke-width="2.6"/>
      <path d="M31 6 L34.5 1 L42.5 9.5 L37 13" fill="#f3f3f3" stroke="#b8b8b8" stroke-width="1.4"/></svg>
<div style="position:absolute;top:182.11px;font-size:17px;line-height:1;color:#b3b3b3;font-weight:400;font-family:'Liberation Sans', sans-serif;white-space:pre;left:1589.00px;width:90px;text-align:center;">Sensitivity</div>
<svg style="position:absolute;left:1628px;top:209px;" width="12" height="8" viewBox="0 0 12 8" fill="none"><path d="M2 2.0 L6 6.0 L10 2.0" stroke="#c0c0c0" stroke-width="1.5"/></svg>
<div style="position:absolute;top:237.14px;font-size:15.9px;line-height:1;color:#262626;font-weight:400;font-family:'Liberation Sans', sans-serif;white-space:pre;left:1589.00px;width:90px;text-align:center;">Sensitivity</div>
<div style="position:absolute;left:1686px;top:125px;width:1px;height:127px;background:#dcdcdc;"></div>
<svg style="position:absolute;left:1707px;top:128px;" width="47" height="47" viewBox="0 0 47 47" fill="none"><rect x="2" y="1.8" width="43.5" height="43.5" stroke="#e0542a" stroke-width="1.5"/>
      <rect x="5.8" y="5.8" width="16.5" height="16.5" stroke="#d83b01" stroke-width="1.5"/><rect x="25.3" y="5.8" width="16.5" height="16.5" stroke="#d83b01" stroke-width="1.5"/>
      <rect x="5.8" y="25.5" width="16.5" height="16" stroke="#d83b01" stroke-width="1.5"/><rect x="25.3" y="25.5" width="16.5" height="16" stroke="#d83b01" stroke-width="1.5"/></svg>
<div style="position:absolute;top:182.11px;font-size:17px;line-height:1;color:#262626;font-weight:400;font-family:'Liberation Sans', sans-serif;white-space:pre;left:1690.00px;width:80px;text-align:center;">Add-ins</div>
<div style="position:absolute;top:237.14px;font-size:15.9px;line-height:1;color:#262626;font-weight:400;font-family:'Liberation Sans', sans-serif;white-space:pre;left:1690.00px;width:80px;text-align:center;">Add-ins</div>
<div style="position:absolute;left:1774px;top:125px;width:1px;height:127px;background:#dcdcdc;"></div>
<svg style="position:absolute;left:1795px;top:129px;" width="46" height="46" viewBox="0 0 46 46" fill="none"><rect x="1.5" y="1.5" width="42" height="42" fill="#f7f7f7" stroke="#404040" stroke-width="1.6"/>
      <rect x="2.3" y="2.3" width="40.4" height="5.5" fill="#c4c4c4"/>
      <path d="M2 8 H43 M2 19 H43 M2 31 H43 M13 31 V43 M27 31 V43" stroke="#7a7a7a" stroke-width="1.3"/>
      <circle cx="21" cy="18.5" r="13.5" fill="#f7f7f7" stroke="#333" stroke-width="1.6"/>
      <path d="M30.5 28.5 L43.5 42.5" stroke="#333" stroke-width="1.6"/>
      <rect x="14.5" y="16.5" width="4" height="7" fill="#c4c4c4" stroke="#777" stroke-width="1"/>
      <rect x="18.5" y="9.5" width="4.5" height="14" fill="#fff" stroke="#333" stroke-width="1.1"/>
      <rect x="23" y="12.5" width="4" height="11" fill="#8cc4f0" stroke="#1e78d4" stroke-width="1.1"/></svg>
<div style="position:absolute;top:182.11px;font-size:17px;line-height:1;color:#262626;font-weight:400;font-family:'Liberation Sans', sans-serif;white-space:pre;left:1777.50px;width:80px;text-align:center;">Analyze</div>
<div style="position:absolute;top:206.11px;font-size:17px;line-height:1;color:#262626;font-weight:400;font-family:'Liberation Sans', sans-serif;white-space:pre;left:1777.50px;width:80px;text-align:center;">Data</div>
<div style="position:absolute;left:1860px;top:125px;width:1px;height:127px;background:#dcdcdc;"></div>
<svg style="position:absolute;left:1881px;top:233px;" width="16" height="12" viewBox="0 0 16 12" fill="none"><path d="M2 3.0 L8 9.0 L14 3.0" stroke="#444" stroke-width="1.6"/></svg>
<svg style="position:absolute;left:25px;top:271px;" width="24" height="24" viewBox="0 0 24 24" fill="none"><circle cx="12" cy="12" r="10.2" stroke="#1e88d4" stroke-width="1.6"/><path d="M12 10.5 V17.5" stroke="#1e88d4" stroke-width="2"/><circle cx="12" cy="7.3" r="1.2" fill="#1e88d4"/></svg>
<div style="position:absolute;top:275.33px;font-size:16.5px;line-height:1;color:#2b2b2b;font-weight:700;font-family:'Liberation Sans', sans-serif;white-space:pre;left:59px;">PRODUCT DEACTIVATED</div>
<div style="position:absolute;top:274.48px;font-size:17.74px;line-height:1;color:#262626;font-weight:400;font-family:'Liberation Sans', sans-serif;white-space:pre;left:273px;">On 15 May 2024, most features of Excel will be disabled if not reactivated.</div>
<svg style="position:absolute;left:1880px;top:274px;" width="16" height="16" viewBox="0 0 16 16" fill="none"><path d="M1.5 1.5 L14.5 14.5 M14.5 1.5 L1.5 14.5" stroke="#333" stroke-width="1.5"/></svg>
<div style="position:absolute;left:11px;top:315px;width:125px;height:30px;box-sizing:border-box;border:1px solid #d6d6d6;border-radius:5px;background:#fff;"></div>
<div style="position:absolute;top:322.16px;font-size:16px;line-height:1;color:#262626;font-weight:400;font-family:'Liberation Sans', sans-serif;white-space:pre;left:17px;">A2</div>
<svg style="position:absolute;left:115px;top:324px;" width="16" height="12" viewBox="0 0 16 12" fill="none"><path d="M2 3.0 L8 9.0 L14 3.0" stroke="#333" stroke-width="1.4"/></svg>
<div style="position:absolute;left:148px;top:323px;width:3px;height:3px;background:#444;"></div>
<div style="position:absolute;left:148px;top:329px;width:3px;height:3px;background:#444;"></div>
<div style="position:absolute;left:148px;top:335px;width:3px;height:3px;background:#444;"></div>
<div style="position:absolute;left:163px;top:315px;width:90px;height:30px;box-sizing:border-box;border:1px solid #d6d6d6;border-radius:5px;background:#fff;"></div>
<svg style="position:absolute;left:169px;top:322px;" width="16" height="16" viewBox="0 0 16 16" fill="none"><path d="M1.5 1.5 L14.5 14.5 M14.5 1.5 L1.5 14.5" stroke="#bdbdbd" stroke-width="1.3"/></svg>
<svg style="position:absolute;left:197px;top:322px;" width="20" height="16" viewBox="0 0 20 16" fill="none"><path d="M1.5 8 L7 13.5 L18.5 2" stroke="#bdbdbd" stroke-width="1.3"/></svg>
<div style="position:absolute;top:321.09px;font-size:19px;line-height:1;color:#333;font-weight:400;font-family:'Liberation Serif', serif;white-space:pre;font-style:italic;left:229px;">fx</div>
<div style="position:absolute;left:260px;top:315px;width:1650px;height:30px;box-sizing:border-box;border:1px solid #d6d6d6;border-radius:5px;background:#fff;"></div>
<div style="position:absolute;top:322.46px;font-size:16px;line-height:1;color:#262626;font-weight:400;font-family:'Liberation Sans', sans-serif;white-space:pre;left:272px;">1</div>
<svg style="position:absolute;left:1889px;top:323px;" width="16" height="12" viewBox="0 0 16 12" fill="none"><path d="M2 3.0 L8 9.0 L14 3.0" stroke="#333" stroke-width="1.4"/></svg>
<div style="position:absolute;left:34px;top:377px;width:1860px;height:570px;background:#fff;"></div>
<div style="position:absolute;left:0px;top:353px;width:1894px;height:23px;background:#f0f0f0;"></div>
<div style="position:absolute;left:34px;top:353px;width:1026px;height:23px;background:#dedede;"></div>
<div style="position:absolute;left:0px;top:377px;width:33px;height:570px;background:#f0f0f0;"></div>
<div style="position:absolute;left:0px;top:407px;width:33px;height:62px;background:#dedede;"></div>
<svg style="position:absolute;left:14px;top:357px;" width="17" height="17" viewBox="0 0 17 17" fill="none"><path d="M16 1 V16 H1 Z" fill="#d4d4d4"/></svg>
<div style="position:absolute;left:111px;top:377px;width:1px;height:570px;background:#e1e1e1;"></div>
<div style="position:absolute;left:111px;top:353px;width:1px;height:23px;background:#d4d4d4;"></div>
<div style="position:absolute;left:349px;top:377px;width:1px;height:570px;background:#e1e1e1;"></div>
<div style="position:absolute;left:349px;top:353px;width:1px;height:23px;background:#d4d4d4;"></div>
<div style="position:absolute;left:546px;top:377px;width:1px;height:570px;background:#e1e1e1;"></div>
<div style="position:absolute;left:546px;top:353px;width:1px;height:23px;background:#d4d4d4;"></div>
<div style="position:absolute;left:726px;top:377px;width:1px;height:570px;background:#e1e1e1;"></div>
<div style="position:absolute;left:726px;top:353px;width:1px;height:23px;background:#d4d4d4;"></div>
<div style="position:absolute;left:925px;top:377px;width:1px;height:570px;background:#e1e1e1;"></div>
<div style="position:absolute;left:925px;top:353px;width:1px;height:23px;background:#d4d4d4;"></div>
<div style="position:absolute;left:1059px;top:377px;width:1px;height:570px;background:#e1e1e1;"></div>
<div style="position:absolute;left:1059px;top:353px;width:1px;height:23px;background:#d4d4d4;"></div>
<div style="position:absolute;left:1139px;top:377px;width:1px;height:570px;background:#e1e1e1;"></div>
<div style="position:absolute;left:1139px;top:353px;width:1px;height:23px;background:#d4d4d4;"></div>
<div style="position:absolute;left:1219px;top:377px;width:1px;height:570px;background:#e1e1e1;"></div>
<div style="position:absolute;left:1219px;top:353px;width:1px;height:23px;background:#d4d4d4;"></div>
<div style="position:absolute;left:1299px;top:377px;width:1px;height:570px;background:#e1e1e1;"></div>
<div style="position:absolute;left:1299px;top:353px;width:1px;height:23px;background:#d4d4d4;"></div>
<div style="position:absolute;left:1379px;top:377px;width:1px;height:570px;background:#e1e1e1;"></div>
<div style="position:absolute;left:1379px;top:353px;width:1px;height:23px;background:#d4d4d4;"></div>
<div style="position:absolute;left:1459px;top:377px;width:1px;height:570px;background:#e1e1e1;"></div>
<div style="position:absolute;left:1459px;top:353px;width:1px;height:23px;background:#d4d4d4;"></div>
<div style="position:absolute;left:1539px;top:377px;width:1px;height:570px;background:#e1e1e1;"></div>
<div style="position:absolute;left:1539px;top:353px;width:1px;height:23px;background:#d4d4d4;"></div>
<div style="position:absolute;left:1619px;top:377px;width:1px;height:570px;background:#e1e1e1;"></div>
<div style="position:absolute;left:1619px;top:353px;width:1px;height:23px;background:#d4d4d4;"></div>
<div style="position:absolute;left:1699px;top:377px;width:1px;height:570px;background:#e1e1e1;"></div>
<div style="position:absolute;left:1699px;top:353px;width:1px;height:23px;background:#d4d4d4;"></div>
<div style="position:absolute;left:1779px;top:377px;width:1px;height:570px;background:#e1e1e1;"></div>
<div style="position:absolute;left:1779px;top:353px;width:1px;height:23px;background:#d4d4d4;"></div>
<div style="position:absolute;left:1859px;top:377px;width:1px;height:570px;background:#e1e1e1;"></div>
<div style="position:absolute;left:1859px;top:353px;width:1px;height:23px;background:#d4d4d4;"></div>
<div style="position:absolute;left:34px;top:407px;width:1860px;height:1px;background:#e1e1e1;"></div>
<div style="position:absolute;left:5px;top:407px;width:28px;height:1px;background:#d8d8d8;"></div>
<div style="position:absolute;left:34px;top:438px;width:1860px;height:1px;background:#e1e1e1;"></div>
<div style="position:absolute;left:5px;top:438px;width:28px;height:1px;background:#d8d8d8;"></div>
<div style="position:absolute;left:34px;top:469px;width:1860px;height:1px;background:#e1e1e1;"></div>
<div style="position:absolute;left:5px;top:469px;width:28px;height:1px;background:#d8d8d8;"></div>
<div style="position:absolute;left:34px;top:500px;width:1860px;height:1px;background:#e1e1e1;"></div>
<div style="position:absolute;left:5px;top:500px;width:28px;height:1px;background:#d8d8d8;"></div>
<div style="position:absolute;left:34px;top:531px;width:1860px;height:1px;background:#e1e1e1;"></div>
<div style="position:absolute;left:5px;top:531px;width:28px;height:1px;background:#d8d8d8;"></div>
<div style="position:absolute;left:34px;top:562px;width:1860px;height:1px;background:#e1e1e1;"></div>
<div style="position:absolute;left:5px;top:562px;width:28px;height:1px;background:#d8d8d8;"></div>
<div style="position:absolute;left:34px;top:593px;width:1860px;height:1px;background:#e1e1e1;"></div>
<div style="position:absolute;left:5px;top:593px;width:28px;height:1px;background:#d8d8d8;"></div>
<div style="position:absolute;left:34px;top:624px;width:1860px;height:1px;background:#e1e1e1;"></div>
<div style="position:absolute;left:5px;top:624px;width:28px;height:1px;background:#d8d8d8;"></div>
<div style="position:absolute;left:34px;top:655px;width:1860px;height:1px;background:#e1e1e1;"></div>
<div style="position:absolute;left:5px;top:655px;width:28px;height:1px;background:#d8d8d8;"></div>
<div style="position:absolute;left:34px;top:679px;width:1860px;height:1px;background:#e1e1e1;"></div>
<div style="position:absolute;left:5px;top:679px;width:28px;height:1px;background:#d8d8d8;"></div>
<div style="position:absolute;left:34px;top:703px;width:1860px;height:1px;background:#e1e1e1;"></div>
<div style="position:absolute;left:5px;top:703px;width:28px;height:1px;background:#d8d8d8;"></div>
<div style="position:absolute;left:34px;top:727px;width:1860px;height:1px;background:#e1e1e1;"></div>
<div style="position:absolute;left:5px;top:727px;width:28px;height:1px;background:#d8d8d8;"></div>
<div style="position:absolute;left:34px;top:751px;width:1860px;height:1px;background:#e1e1e1;"></div>
<div style="position:absolute;left:5px;top:751px;width:28px;height:1px;background:#d8d8d8;"></div>
<div style="position:absolute;left:34px;top:775px;width:1860px;height:1px;background:#e1e1e1;"></div>
<div style="position:absolute;left:5px;top:775px;width:28px;height:1px;background:#d8d8d8;"></div>
<div style="position:absolute;left:34px;top:799px;width:1860px;height:1px;background:#e1e1e1;"></div>
<div style="position:absolute;left:5px;top:799px;width:28px;height:1px;background:#d8d8d8;"></div>
<div style="position:absolute;left:34px;top:823px;width:1860px;height:1px;background:#e1e1e1;"></div>
<div style="position:absolute;left:5px;top:823px;width:28px;height:1px;background:#d8d8d8;"></div>
<div style="position:absolute;left:34px;top:847px;width:1860px;height:1px;background:#e1e1e1;"></div>
<div style="position:absolute;left:5px;top:847px;width:28px;height:1px;background:#d8d8d8;"></div>
<div style="position:absolute;left:34px;top:871px;width:1860px;height:1px;background:#e1e1e1;"></div>
<div style="position:absolute;left:5px;top:871px;width:28px;height:1px;background:#d8d8d8;"></div>
<div style="position:absolute;left:34px;top:895px;width:1860px;height:1px;background:#e1e1e1;"></div>
<div style="position:absolute;left:5px;top:895px;width:28px;height:1px;background:#d8d8d8;"></div>
<div style="position:absolute;left:34px;top:919px;width:1860px;height:1px;background:#e1e1e1;"></div>
<div style="position:absolute;left:5px;top:919px;width:28px;height:1px;background:#d8d8d8;"></div>
<div style="position:absolute;left:34px;top:943px;width:1860px;height:1px;background:#e1e1e1;"></div>
<div style="position:absolute;left:5px;top:943px;width:28px;height:1px;background:#d8d8d8;"></div>
<div style="position:absolute;left:0px;top:376px;width:1894px;height:1px;background:#ababab;"></div>
<div style="position:absolute;left:33px;top:353px;width:1px;height:594px;background:#ababab;"></div>
<div style="position:absolute;left:31px;top:407px;width:3px;height:62px;background:#107c41;"></div>
<div style="position:absolute;left:34px;top:407px;width:78px;height:62px;background:#c6c6c6;"></div>
<div style="position:absolute;left:112px;top:407px;width:238px;height:62px;background:#c6c6c6;"></div>
<div style="position:absolute;left:350px;top:407px;width:197px;height:62px;background:#c6c6c6;"></div>
<div style="position:absolute;left:547px;top:407px;width:180px;height:62px;background:#c6c6c6;"></div>
<div style="position:absolute;left:727px;top:407px;width:199px;height:62px;background:#c6c6c6;"></div>
<div style="position:absolute;left:926px;top:407px;width:134px;height:62px;background:#c6c6c6;"></div>
<div style="position:absolute;left:34px;top:407px;width:77px;height:31px;background:#fff;"></div>
<div style="position:absolute;left:111px;top:376px;width:1px;height:280px;background:#000;"></div>
<div style="position:absolute;left:349px;top:376px;width:1px;height:280px;background:#000;"></div>
<div style="position:absolute;left:546px;top:376px;width:1px;height:280px;background:#000;"></div>
<div style="position:absolute;left:726px;top:376px;width:1px;height:280px;background:#000;"></div>
<div style="position:absolute;left:925px;top:376px;width:1px;height:280px;background:#000;"></div>
<div style="position:absolute;left:1059px;top:376px;width:1px;height:280px;background:#000;"></div>
<div style="position:absolute;left:34px;top:376px;width:1026px;height:1px;background:#000;"></div>
<div style="position:absolute;left:34px;top:407px;width:1026px;height:1px;background:#000;"></div>
<div style="position:absolute;left:34px;top:438px;width:1026px;height:1px;background:#000;"></div>
<div style="position:absolute;left:34px;top:469px;width:1026px;height:1px;background:#000;"></div>
<div style="position:absolute;left:34px;top:500px;width:1026px;height:1px;background:#000;"></div>
<div style="position:absolute;left:34px;top:531px;width:1026px;height:1px;background:#000;"></div>
<div style="position:absolute;left:34px;top:562px;width:1026px;height:1px;background:#000;"></div>
<div style="position:absolute;left:34px;top:593px;width:1026px;height:1px;background:#000;"></div>
<div style="position:absolute;left:34px;top:624px;width:1026px;height:1px;background:#000;"></div>
<div style="position:absolute;left:34px;top:655px;width:1026px;height:1px;background:#000;"></div>
<div style="position:absolute;left:34px;top:375px;width:1026px;height:2px;background:#107c41;"></div>
<div style="position:absolute;left:32px;top:406px;width:1029px;height:64px;box-sizing:border-box;border:2px solid #107c41;"></div>
<div style="position:absolute;left:1057px;top:466px;width:7px;height:7px;background:#107c41;border:1px solid #fff;"></div>
<div style="position:absolute;top:357.33px;font-size:15.8px;line-height:1;color:#107c41;font-weight:400;font-family:'Liberation Sans', sans-serif;white-space:pre;left:52.00px;width:40px;text-align:center;">A</div>
<div style="position:absolute;top:357.33px;font-size:15.8px;line-height:1;color:#107c41;font-weight:400;font-family:'Liberation Sans', sans-serif;white-space:pre;left:210.00px;width:40px;text-align:center;">B</div>
<div style="position:absolute;top:357.33px;font-size:15.8px;line-height:1;color:#107c41;font-weight:400;font-family:'Liberation Sans', sans-serif;white-space:pre;left:427.50px;width:40px;text-align:center;">C</div>
<div style="position:absolute;top:357.33px;font-size:15.8px;line-height:1;color:#107c41;font-weight:400;font-family:'Liberation Sans', sans-serif;white-space:pre;left:616.00px;width:40px;text-align:center;">D</div>
<div style="position:absolute;top:357.33px;font-size:15.8px;line-height:1;color:#107c41;font-weight:400;font-family:'Liberation Sans', sans-serif;white-space:pre;left:805.50px;width:40px;text-align:center;">E</div>
<div style="position:absolute;top:357.33px;font-size:15.8px;line-height:1;color:#107c41;font-weight:400;font-family:'Liberation Sans', sans-serif;white-space:pre;left:972.00px;width:40px;text-align:center;">F</div>
<div style="position:absolute;top:357.33px;font-size:15.8px;line-height:1;color:#444;font-weight:400;font-family:'Liberation Sans', sans-serif;white-space:pre;left:1079.00px;width:40px;text-align:center;">G</div>
<div style="position:absolute;top:357.33px;font-size:15.8px;line-height:1;color:#444;font-weight:400;font-family:'Liberation Sans', sans-serif;white-space:pre;left:1159.00px;width:40px;text-align:center;">H</div>
<div style="position:absolute;top:357.33px;font-size:15.8px;line-height:1;color:#444;font-weight:400;font-family:'Liberation Sans', sans-serif;white-space:pre;left:1239.00px;width:40px;text-align:center;">I</div>
<div style="position:absolute;top:357.33px;font-size:15.8px;line-height:1;color:#444;font-weight:400;font-family:'Liberation Sans', sans-serif;white-space:pre;left:1319.00px;width:40px;text-align:center;">J</div>
<div style="position:absolute;top:357.33px;font-size:15.8px;line-height:1;color:#444;font-weight:400;font-family:'Liberation Sans', sans-serif;white-space:pre;left:1399.00px;width:40px;text-align:center;">K</div>
<div style="position:absolute;top:357.33px;font-size:15.8px;line-height:1;color:#444;font-weight:400;font-family:'Liberation Sans', sans-serif;white-space:pre;left:1479.00px;width:40px;text-align:center;">L</div>
<div style="position:absolute;top:357.33px;font-size:15.8px;line-height:1;color:#444;font-weight:400;font-family:'Liberation Sans', sans-serif;white-space:pre;left:1559.00px;width:40px;text-align:center;">M</div>
<div style="position:absolute;top:357.33px;font-size:15.8px;line-height:1;color:#444;font-weight:400;font-family:'Liberation Sans', sans-serif;white-space:pre;left:1639.00px;width:40px;text-align:center;">N</div>
<div style="position:absolute;top:357.33px;font-size:15.8px;line-height:1;color:#444;font-weight:400;font-family:'Liberation Sans', sans-serif;white-space:pre;left:1719.00px;width:40px;text-align:center;">O</div>
<div style="position:absolute;top:357.33px;font-size:15.8px;line-height:1;color:#444;font-weight:400;font-family:'Liberation Sans', sans-serif;white-space:pre;left:1799.00px;width:40px;text-align:center;">P</div>
<div style="position:absolute;top:385.96px;font-size:16px;line-height:1;color:#444;font-weight:400;font-family:'Liberation Sans', sans-serif;white-space:pre;left:2.50px;width:30px;text-align:center;">1</div>
<div style="position:absolute;top:416.46px;font-size:16px;line-height:1;color:#107c41;font-weight:400;font-family:'Liberation Sans', sans-serif;white-space:pre;left:2.50px;width:30px;text-align:center;">2</div>
<div style="position:absolute;top:447.46px;font-size:16px;line-height:1;color:#107c41;font-weight:400;font-family:'Liberation Sans', sans-serif;white-space:pre;left:2.50px;width:30px;text-align:center;">3</div>
<div style="position:absolute;top:478.46px;font-size:16px;line-height:1;color:#444;font-weight:400;font-family:'Liberation Sans', sans-serif;white-space:pre;left:2.50px;width:30px;text-align:center;">4</div>
<div style="position:absolute;top:509.46px;font-size:16px;line-height:1;color:#444;font-weight:400;font-family:'Liberation Sans', sans-serif;white-space:pre;left:2.50px;width:30px;text-align:center;">5</div>
<div style="position:absolute;top:540.46px;font-size:16px;line-height:1;color:#444;font-weight:400;font-family:'Liberation Sans', sans-serif;white-space:pre;left:2.50px;width:30px;text-align:center;">6</div>
<div style="position:absolute;top:571.46px;font-size:16px;line-height:1;color:#444;font-weight:400;font-family:'Liberation Sans', sans-serif;white-space:pre;left:2.50px;width:30px;text-align:center;">7</div>
<div style="position:absolute;top:602.46px;font-size:16px;line-height:1;color:#444;font-weight:400;font-family:'Liberation Sans', sans-serif;white-space:pre;left:2.50px;width:30px;text-align:center;">8</div>
<div style="position:absolute;top:633.46px;font-size:16px;line-height:1;color:#444;font-weight:400;font-family:'Liberation Sans', sans-serif;white-space:pre;left:2.50px;width:30px;text-align:center;">9</div>
<div style="position:absolute;top:660.46px;font-size:16px;line-height:1;color:#444;font-weight:400;font-family:'Liberation Sans', sans-serif;white-space:pre;left:2.50px;width:30px;text-align:center;">10</div>
<div style="position:absolute;top:684.46px;font-size:16px;line-height:1;color:#444;font-weight:400;font-family:'Liberation Sans', sans-serif;white-space:pre;left:2.50px;width:30px;text-align:center;">11</div>
<div style="position:absolute;top:708.46px;font-size:16px;line-height:1;color:#444;font-weight:400;font-family:'Liberation Sans', sans-serif;white-space:pre;left:2.50px;width:30px;text-align:center;">12</div>
<div style="position:absolute;top:732.46px;font-size:16px;line-height:1;color:#444;font-weight:400;font-family:'Liberation Sans', sans-serif;white-space:pre;left:2.50px;width:30px;text-align:center;">13</div>
<div style="position:absolute;top:756.46px;font-size:16px;line-height:1;color:#444;font-weight:400;font-family:'Liberation Sans', sans-serif;white-space:pre;left:2.50px;width:30px;text-align:center;">14</div>
<div style="position:absolute;top:780.46px;font-size:16px;line-height:1;color:#444;font-weight:400;font-family:'Liberation Sans', sans-serif;white-space:pre;left:2.50px;width:30px;text-align:center;">15</div>
<div style="position:absolute;top:804.46px;font-size:16px;line-height:1;color:#444;font-weight:400;font-family:'Liberation Sans', sans-serif;white-space:pre;left:2.50px;width:30px;text-align:center;">16</div>
<div style="position:absolute;top:828.46px;font-size:16px;line-height:1;color:#444;font-weight:400;font-family:'Liberation Sans', sans-serif;white-space:pre;left:2.50px;width:30px;text-align:center;">17</div>
<div style="position:absolute;top:852.46px;font-size:16px;line-height:1;color:#444;font-weight:400;font-family:'Liberation Sans', sans-serif;white-space:pre;left:2.50px;width:30px;text-align:center;">18</div>
<div style="position:absolute;top:876.46px;font-size:16px;line-height:1;color:#444;font-weight:400;font-family:'Liberation Sans', sans-serif;white-space:pre;left:2.50px;width:30px;text-align:center;">19</div>
<div style="position:absolute;top:900.46px;font-size:16px;line-height:1;color:#444;font-weight:400;font-family:'Liberation Sans', sans-serif;white-space:pre;left:2.50px;width:30px;text-align:center;">20</div>
<div style="position:absolute;top:924.46px;font-size:16px;line-height:1;color:#444;font-weight:400;font-family:'Liberation Sans', sans-serif;white-space:pre;left:2.50px;width:30px;text-align:center;">21</div>
<div style="position:absolute;top:380.87px;font-size:23.2px;line-height:1;color:#000;font-weight:700;font-family:'Liberation Serif', serif;white-space:pre;transform:scaleX(1.1);left:-27.50px;width:200px;text-align:center;">Sl.No</div>
<div style="position:absolute;top:380.87px;font-size:23.2px;line-height:1;color:#000;font-weight:700;font-family:'Liberation Serif', serif;white-space:pre;transform:scaleX(1.1);left:130.00px;width:200px;text-align:center;">Item</div>
<div style="position:absolute;top:380.87px;font-size:23.2px;line-height:1;color:#000;font-weight:700;font-family:'Liberation Serif', serif;white-space:pre;transform:scaleX(1.1);left:347.50px;width:200px;text-align:center;">Quantity</div>
<div style="position:absolute;top:380.87px;font-size:23.2px;line-height:1;color:#000;font-weight:700;font-family:'Liberation Serif', serif;white-space:pre;transform:scaleX(1.1);left:536.00px;width:200px;text-align:center;">Unit Price</div>
<div style="position:absolute;top:380.87px;font-size:23.2px;line-height:1;color:#000;font-weight:700;font-family:'Liberation Serif', serif;white-space:pre;transform:scaleX(1.1);left:892.00px;width:200px;text-align:center;">Total Price</div>
<div style="position:absolute;top:411.87px;font-size:23.2px;line-height:1;color:#000;font-weight:700;font-family:'Liberation Serif', serif;white-space:pre;transform:scaleX(1.02);left:-27.50px;width:200px;text-align:center;">1</div>
<div style="position:absolute;top:411.87px;font-size:23.2px;line-height:1;color:#000;font-weight:400;font-family:'Liberation Serif', serif;white-space:pre;transform:scaleX(1.1);left:130.00px;width:200px;text-align:center;">Smartphone</div>
<div style="position:absolute;top:411.87px;font-size:23.2px;line-height:1;color:#000;font-weight:400;font-family:'Liberation Serif', serif;white-space:pre;transform:scaleX(1.02);left:347.50px;width:200px;text-align:center;">50</div>
<div style="position:absolute;top:411.87px;font-size:23.2px;line-height:1;color:#000;font-weight:400;font-family:'Liberation Serif', serif;white-space:pre;transform:scaleX(1.02);left:536.00px;width:200px;text-align:center;">15000</div>
<div style="position:absolute;top:442.87px;font-size:23.2px;line-height:1;color:#000;font-weight:700;font-family:'Liberation Serif', serif;white-space:pre;transform:scaleX(1.02);left:-27.50px;width:200px;text-align:center;">2</div>
<div style="position:absolute;top:442.87px;font-size:23.2px;line-height:1;color:#000;font-weight:400;font-family:'Liberation Serif', serif;white-space:pre;transform:scaleX(1.1);left:130.00px;width:200px;text-align:center;">Monitor</div>
<div style="position:absolute;top:442.87px;font-size:23.2px;line-height:1;color:#000;font-weight:400;font-family:'Liberation Serif', serif;white-space:pre;transform:scaleX(1.02);left:347.50px;width:200px;text-align:center;">20</div>
<div style="position:absolute;top:442.87px;font-size:23.2px;line-height:1;color:#000;font-weight:400;font-family:'Liberation Serif', serif;white-space:pre;transform:scaleX(1.02);left:536.00px;width:200px;text-align:center;">8000</div>
<div style="position:absolute;top:473.87px;font-size:23.2px;line-height:1;color:#000;font-weight:700;font-family:'Liberation Serif', serif;white-space:pre;transform:scaleX(1.02);left:-27.50px;width:200px;text-align:center;">3</div>
<div style="position:absolute;top:473.87px;font-size:23.2px;line-height:1;color:#000;font-weight:400;font-family:'Liberation Serif', serif;white-space:pre;transform:scaleX(1.1);left:130.00px;width:200px;text-align:center;">Smart TV</div>
<div style="position:absolute;top:473.87px;font-size:23.2px;line-height:1;color:#000;font-weight:400;font-family:'Liberation Serif', serif;white-space:pre;transform:scaleX(1.02);left:347.50px;width:200px;text-align:center;">15</div>
<div style="position:absolute;top:473.87px;font-size:23.2px;line-height:1;color:#000;font-weight:400;font-family:'Liberation Serif', serif;white-space:pre;transform:scaleX(1.02);left:536.00px;width:200px;text-align:center;">30000</div>
<div style="position:absolute;top:504.87px;font-size:23.2px;line-height:1;color:#000;font-weight:700;font-family:'Liberation Serif', serif;white-space:pre;transform:scaleX(1.02);left:-27.50px;width:200px;text-align:center;">4</div>
<div style="position:absolute;top:504.87px;font-size:23.2px;line-height:1;color:#000;font-weight:400;font-family:'Liberation Serif', serif;white-space:pre;transform:scaleX(1.1);left:130.00px;width:200px;text-align:center;">Apple Watch</div>
<div style="position:absolute;top:504.87px;font-size:23.2px;line-height:1;color:#000;font-weight:400;font-family:'Liberation Serif', serif;white-space:pre;transform:scaleX(1.02);left:347.50px;width:200px;text-align:center;">60</div>
<div style="position:absolute;top:504.87px;font-size:23.2px;line-height:1;color:#000;font-weight:400;font-family:'Liberation Serif', serif;white-space:pre;transform:scaleX(1.02);left:536.00px;width:200px;text-align:center;">25000</div>
<div style="position:absolute;top:535.87px;font-size:23.2px;line-height:1;color:#000;font-weight:700;font-family:'Liberation Serif', serif;white-space:pre;transform:scaleX(1.02);left:-27.50px;width:200px;text-align:center;">5</div>
<div style="position:absolute;top:535.87px;font-size:23.2px;line-height:1;color:#000;font-weight:400;font-family:'Liberation Serif', serif;white-space:pre;transform:scaleX(1.1);left:130.00px;width:200px;text-align:center;">Mouse</div>
<div style="position:absolute;top:535.87px;font-size:23.2px;line-height:1;color:#000;font-weight:400;font-family:'Liberation Serif', serif;white-space:pre;transform:scaleX(1.02);left:347.50px;width:200px;text-align:center;">20</div>
<div style="position:absolute;top:535.87px;font-size:23.2px;line-height:1;color:#000;font-weight:400;font-family:'Liberation Serif', serif;white-space:pre;transform:scaleX(1.02);left:536.00px;width:200px;text-align:center;">300</div>
<div style="position:absolute;top:566.87px;font-size:23.2px;line-height:1;color:#000;font-weight:700;font-family:'Liberation Serif', serif;white-space:pre;transform:scaleX(1.02);left:-27.50px;width:200px;text-align:center;">6</div>
<div style="position:absolute;top:566.87px;font-size:23.2px;line-height:1;color:#000;font-weight:400;font-family:'Liberation Serif', serif;white-space:pre;transform:scaleX(1.1);left:130.00px;width:200px;text-align:center;">Printer</div>
<div style="position:absolute;top:566.87px;font-size:23.2px;line-height:1;color:#000;font-weight:400;font-family:'Liberation Serif', serif;white-space:pre;transform:scaleX(1.02);left:347.50px;width:200px;text-align:center;">20</div>
<div style="position:absolute;top:566.87px;font-size:23.2px;line-height:1;color:#000;font-weight:400;font-family:'Liberation Serif', serif;white-space:pre;transform:scaleX(1.02);left:536.00px;width:200px;text-align:center;">12000</div>
<div style="position:absolute;top:597.87px;font-size:23.2px;line-height:1;color:#000;font-weight:700;font-family:'Liberation Serif', serif;white-space:pre;transform:scaleX(1.02);left:-27.50px;width:200px;text-align:center;">7</div>
<div style="position:absolute;top:597.87px;font-size:23.2px;line-height:1;color:#000;font-weight:400;font-family:'Liberation Serif', serif;white-space:pre;transform:scaleX(1.1);left:130.00px;width:200px;text-align:center;">Headphone</div>
<div style="position:absolute;top:597.87px;font-size:23.2px;line-height:1;color:#000;font-weight:400;font-family:'Liberation Serif', serif;white-space:pre;transform:scaleX(1.02);left:347.50px;width:200px;text-align:center;">60</div>
<div style="position:absolute;top:597.87px;font-size:23.2px;line-height:1;color:#000;font-weight:400;font-family:'Liberation Serif', serif;white-space:pre;transform:scaleX(1.02);left:536.00px;width:200px;text-align:center;">5000</div>
<div style="position:absolute;top:628.87px;font-size:23.2px;line-height:1;color:#000;font-weight:700;font-family:'Liberation Serif', serif;white-space:pre;transform:scaleX(1.02);left:-27.50px;width:200px;text-align:center;">8</div>
<div style="position:absolute;top:628.87px;font-size:23.2px;line-height:1;color:#000;font-weight:400;font-family:'Liberation Serif', serif;white-space:pre;transform:scaleX(1.1);left:130.00px;width:200px;text-align:center;">Keyboard</div>
<div style="position:absolute;top:628.87px;font-size:23.2px;line-height:1;color:#000;font-weight:400;font-family:'Liberation Serif', serif;white-space:pre;transform:scaleX(1.02);left:347.50px;width:200px;text-align:center;">20</div>
<div style="position:absolute;top:628.87px;font-size:23.2px;line-height:1;color:#000;font-weight:400;font-family:'Liberation Serif', serif;white-space:pre;transform:scaleX(1.02);left:536.00px;width:200px;text-align:center;">2000</div>
<div style="position:absolute;left:1894px;top:353px;width:26px;height:594px;background:#f0f0f0;"></div>
<div style="position:absolute;left:1897px;top:356px;width:20px;height:588px;background:#f7f7f7;border-radius:10px;"></div>
<svg style="position:absolute;left:1901px;top:358px;" width="14" height="12" viewBox="0 0 14 12" fill="none"><path d="M1.5 10 L7 2.5 L12.5 10 Z" fill="#707070" stroke="#707070" stroke-width="1.5" stroke-linejoin="round"/></svg>
<div style="position:absolute;left:1902px;top:374px;width:11px;height:531px;background:#6f6f6f;border-radius:6px;"></div>
<svg style="position:absolute;left:1901px;top:932px;" width="14" height="12" viewBox="0 0 14 12" fill="none"><path d="M1.5 2 L7 9.5 L12.5 2 Z" fill="#707070" stroke="#707070" stroke-width="1.5" stroke-linejoin="round"/></svg>
<div style="position:absolute;left:0px;top:946px;width:1894px;height:1px;background:#d0d0d0;"></div>
<div style="position:absolute;left:0px;top:947px;width:1920px;height:40px;background:#f0f0f0;"></div>
<svg style="position:absolute;left:30px;top:959px;" width="12" height="14" viewBox="0 0 12 14" fill="none"><path d="M9 1.5 L3 7 L9 12.5" stroke="#8a8a8a" stroke-width="1.3"/></svg>
<svg style="position:absolute;left:70px;top:959px;" width="12" height="14" viewBox="0 0 12 14" fill="none"><path d="M3 1.5 L9 7 L3 12.5" stroke="#8a8a8a" stroke-width="1.3"/></svg>
<div style="position:absolute;left:141px;top:945px;width:72px;height:37px;background:#fff;border-radius:0 0 6px 6px;box-shadow:0 0.5px 1px rgba(0,0,0,0.15);"></div>
<div style="position:absolute;top:956.96px;font-size:16px;line-height:1;color:#1a1a1a;font-weight:700;font-family:'Liberation Sans', sans-serif;white-space:pre;letter-spacing:-0.2px;left:151.5px;">Sheet1</div>
<div style="position:absolute;left:151px;top:977px;width:52px;height:2px;background:#107c41;"></div>
<div style="position:absolute;left:218px;top:955px;width:1px;height:24px;background:#c8c8c8;"></div>
<svg style="position:absolute;left:270px;top:959px;" width="16" height="16" viewBox="0 0 16 16" fill="none"><path d="M8 1 V15 M1 8 H15" stroke="#333" stroke-width="1.6"/></svg>
<div style="position:absolute;left:1154px;top:963px;width:3px;height:3px;background:#333;"></div>
<div style="position:absolute;left:1154px;top:968px;width:3px;height:3px;background:#333;"></div>
<div style="position:absolute;left:1154px;top:973px;width:3px;height:3px;background:#333;"></div>
<div style="position:absolute;left:1176px;top:956px;width:640px;height:21px;background:#f8f8f8;border-radius:10px;"></div>
<div style="position:absolute;left:1176px;top:956px;width:716px;height:21px;background:#f8f8f8;border-radius:10px;"></div>
<svg style="position:absolute;left:1181px;top:961px;" width="11" height="12" viewBox="0 0 11 12" fill="none"><path d="M9.5 1.5 L2 6 L9.5 10.5 Z" fill="#707070" stroke="#707070" stroke-width="1.3" stroke-linejoin="round"/></svg>
<div style="position:absolute;left:1197px;top:961.5px;width:661px;height:10.5px;background:#6f6f6f;border-radius:6px;"></div>
<svg style="position:absolute;left:1881px;top:961px;" width="11" height="12" viewBox="0 0 11 12" fill="none"><path d="M1.5 1.5 L9 6 L1.5 10.5 Z" fill="#707070" stroke="#707070" stroke-width="1.3" stroke-linejoin="round"/></svg>
<div style="position:absolute;left:0px;top:987px;width:1920px;height:27px;background:#f3f3f3;"></div>
<div style="position:absolute;left:0px;top:986px;width:1920px;height:1px;background:#e6e6e6;"></div>
<div style="position:absolute;top:996.98px;font-size:14.2px;line-height:1;color:#333;font-weight:400;font-family:'Liberation Sans', sans-serif;white-space:pre;left:15.6px;">Ready</div>
<svg style="position:absolute;left:80px;top:990px;" width="28" height="24" viewBox="0 0 28 24" fill="none"><circle cx="11.4" cy="6.7" r="2.9" stroke="#222" stroke-width="1.5"/>
      <path d="M7.5 13 Q3.5 12 3.5 9.5 Q3.5 7 7 8 Q11.4 10 15.8 8 Q19.3 7 19.3 9.5 Q19.3 12 15.5 13 V17" stroke="#222" stroke-width="1.5" stroke-linejoin="round"/>
      <path d="M7.5 13 Q8.3 18 6.5 21 Q5.5 24 7 25" stroke="#222" stroke-width="1.5"/>
      <path d="M12 20.5 L16.5 25 L24.5 17" stroke="#222" stroke-width="1.5"/></svg>
<div style="position:absolute;top:996.32px;font-size:14.98px;line-height:1;color:#333;font-weight:400;font-family:'Liberation Sans', sans-serif;white-space:pre;left:108px;">Accessibility: Good to go</div>
<div style="position:absolute;top:996.85px;font-size:14.35px;line-height:1;color:#333;font-weight:400;font-family:'Liberation Sans', sans-serif;white-space:pre;left:1139.7px;">Average: 2884.15</div>
<div style="position:absolute;top:996.85px;font-size:14.35px;line-height:1;color:#333;font-weight:400;font-family:'Liberation Sans', sans-serif;white-space:pre;left:1289.3px;">Count: 10</div>
<div style="position:absolute;top:996.85px;font-size:14.35px;line-height:1;color:#333;font-weight:400;font-family:'Liberation Sans', sans-serif;white-space:pre;left:1376.4px;">Sum: 23073.2</div>
<div style="position:absolute;left:1496px;top:988px;width:54px;height:26px;background:#e0e0e0;"></div>
<svg style="position:absolute;left:1512px;top:993px;" width="21" height="20" viewBox="0 0 21 20" fill="none"><rect x="1" y="1" width="19" height="18" stroke="#333" stroke-width="1.6"/><path d="M7.3 1 V19 M13.6 1 V19 M1 7 H20 M1 13 H20" stroke="#333" stroke-width="1.6"/></svg>
<svg style="position:absolute;left:1566px;top:993px;" width="22" height="20" viewBox="0 0 22 20" fill="none"><rect x="1" y="1" width="20" height="18" stroke="#333" stroke-width="1.5"/><rect x="5" y="4.5" width="12" height="11" stroke="#333" stroke-width="1.3"/><path d="M7.5 7.5 H14.5 M7.5 10 H14.5 M7.5 12.5 H14.5" stroke="#333" stroke-width="1.2"/></svg>
<svg style="position:absolute;left:1619px;top:993px;" width="23" height="21" viewBox="0 0 23 21" fill="none"><path d="M2 1.5 H21.5 V19 H2 Z" stroke="#222" stroke-width="1.5"/><path d="M2 11.5 H14.3 V1.5 M8 1.5 V11.5" stroke="#222" stroke-width="1.5"/></svg>
<div style="position:absolute;left:1665px;top:1003px;width:12px;height:1.3px;background:#444;"></div>
<div style="position:absolute;left:1683px;top:1004px;width:153px;height:1px;background:#888;"></div>
<div style="position:absolute;left:1756px;top:994px;width:7px;height:18px;background:#666;border-radius:1px;"></div>
<svg style="position:absolute;left:1841px;top:996px;" width="14" height="14" viewBox="0 0 14 14" fill="none"><path d="M7 1 V13 M1 7 H13" stroke="#444" stroke-width="1.3"/></svg>
<div style="position:absolute;top:995.83px;font-size:15.2px;line-height:1;color:#333;font-weight:400;font-family:'Liberation Sans', sans-serif;white-space:pre;left:1870.7px;">100%</div>
<div style="position:absolute;left:704.8px;top:118.3px;width:342px;height:920px;box-sizing:border-box;border:1.3px solid #707070;border-radius:5px;background:#fff;box-shadow:0 3px 8px rgba(0,0,0,0.18);"></div>
<div style="position:absolute;left:712px;top:125.5px;width:328px;height:33px;box-sizing:border-box;border:1.2px solid #7a7a7a;background:#fff;"></div>
<div style="position:absolute;top:131.63px;font-size:15.2px;line-height:1;color:#6a6a6a;font-weight:400;font-family:'Liberation Sans', sans-serif;white-space:pre;left:720.4px;">Search the menus</div>
<svg style="position:absolute;left:725px;top:171px;" width="18" height="24" viewBox="0 0 18 24" fill="none"><path d="M4.5 1 L11.5 16.5 M13.5 1 L6.5 16.5" stroke="#555" stroke-width="1.1"/>
      <circle cx="4.3" cy="19.3" r="2.8" stroke="#1e88d4" stroke-width="1.6"/><circle cx="13.7" cy="19.3" r="2.8" stroke="#1e88d4" stroke-width="1.6"/></svg>
<div style="position:absolute;top:175.94px;font-size:17.2px;line-height:1;color:#1a1a1a;font-weight:400;font-family:'Liberation Sans', sans-serif;white-space:pre;left:757.5px;">Cu<u>t</u></div>
<svg style="position:absolute;left:722px;top:212px;" width="24" height="24" viewBox="0 0 24 24" fill="none"><path d="M9 3 L8 1.5 H2 V17 H6" stroke="#555" stroke-width="1.4"/>
      <path d="M6.5 5 H16 L21.5 10.5 V22.5 H6.5 Z" fill="#fafafa" stroke="#555" stroke-width="1.4"/>
      <path d="M16 5 V10.5 H21.5" stroke="#555" stroke-width="1.2"/>
      <path d="M10 15 H18 M10 18.5 H18" stroke="#888" stroke-width="1.2"/></svg>
<div style="position:absolute;top:216.38px;font-size:17.86px;line-height:1;color:#1a1a1a;font-weight:400;font-family:'Liberation Sans', sans-serif;white-space:pre;left:757.5px;"><u>C</u>opy</div>
<svg style="position:absolute;left:723px;top:252px;" width="26" height="26" viewBox="0 0 26 26" fill="none"><path d="M2 5 H8 M16 5 H17 V10" stroke="#e8871e" stroke-width="1.8"/><path d="M2 4 V23 H10" stroke="#e8871e" stroke-width="1.8"/>
      <path d="M6 7 V3 H9 Q11 -0.5 13 3 H16 V7 Z" fill="#f4f4f4" stroke="#5c5c5c" stroke-width="1.4"/>
      <rect x="12" y="11" width="11" height="14" fill="#f2f2f2" stroke="#4d4d4d" stroke-width="1.5"/></svg>
<div style="position:absolute;top:261.30px;font-size:17.25px;line-height:1;color:#1a1a1a;font-weight:700;font-family:'Liberation Sans', sans-serif;white-space:pre;left:758.8px;">Paste Options:</div>
<svg style="position:absolute;left:759px;top:295px;" width="34" height="36" viewBox="0 0 34 36" fill="none"><rect x="2" y="5" width="22" height="26" fill="#fde9b3" stroke="#e8871e" stroke-width="1.8"/>
          <rect x="4" y="7" width="18" height="22" fill="#fafafa"/>
          <path d="M7.5 8.5 V4 H10.5 Q13 0 15.5 4 H18.5 V8.5 Z" fill="#f4f4f4" stroke="#5c5c5c" stroke-width="1.4"/><rect x="15" y="14.5" width="17" height="19.5" fill="#f2f2f2" stroke="#4d4d4d" stroke-width="1.6"/></svg>
<svg style="position:absolute;left:803px;top:295px;" width="34" height="36" viewBox="0 0 34 36" fill="none"><rect x="2" y="5" width="22" height="26" fill="#fde9b3" stroke="#e8871e" stroke-width="1.8"/>
          <rect x="4" y="7" width="18" height="22" fill="#fafafa"/>
          <path d="M7.5 8.5 V4 H10.5 Q13 0 15.5 4 H18.5 V8.5 Z" fill="#f4f4f4" stroke="#5c5c5c" stroke-width="1.4"/><rect x="12" y="13" width="21" height="21" fill="#f2f2f2" stroke="#4d4d4d" stroke-width="1.5"/><path d="M12 19 H33 M12 28 H33 M18 13 V34 M27 13 V34" stroke="#777" stroke-width="1"/><path d="M18 26 L22 21 L25 24 L27 22 L30 26 Z" fill="#5fa6e0" stroke="#1e88d4" stroke-width="1"/></svg>
<div style="position:absolute;top:351.10px;font-size:16.3px;line-height:1;color:#1a1a1a;font-weight:400;font-family:'Liberation Sans', sans-serif;white-space:pre;left:757.5px;">Paste <u>S</u>pecial...</div>
<div style="position:absolute;left:753px;top:380px;width:291px;height:1px;background:#d6d6d6;"></div>
<svg style="position:absolute;left:721px;top:389px;" width="26" height="25" viewBox="0 0 26 25" fill="none"><circle cx="16" cy="9" r="7.5" stroke="#1e88d4" stroke-width="1.5"/><path d="M10.5 14.5 L1.5 23.5" stroke="#1e88d4" stroke-width="1.6"/><path d="M16 8 V13" stroke="#1e88d4" stroke-width="1.6"/><circle cx="16" cy="5.5" r="1" fill="#1e88d4"/></svg>
<div style="position:absolute;top:393.62px;font-size:17.7px;line-height:1;color:#1a1a1a;font-weight:400;font-family:'Liberation Sans', sans-serif;white-space:pre;left:757.5px;">Smart <u>L</u>ookup</div>
<div style="position:absolute;left:753px;top:424px;width:291px;height:1px;background:#d6d6d6;"></div>
<div style="position:absolute;top:439.42px;font-size:16.4px;line-height:1;color:#1a1a1a;font-weight:400;font-family:'Liberation Sans', sans-serif;white-space:pre;left:757.5px;"><u>I</u>nsert...</div>
<div style="position:absolute;top:480.20px;font-size:16.3px;line-height:1;color:#1a1a1a;font-weight:400;font-family:'Liberation Sans', sans-serif;white-space:pre;left:757.5px;"><u>D</u>elete...</div>
<div style="position:absolute;top:520.02px;font-size:17.1px;line-height:1;color:#1a1a1a;font-weight:400;font-family:'Liberation Sans', sans-serif;white-space:pre;left:757.5px;">Clear Co<u>n</u>tents</div>
<div style="position:absolute;left:753px;top:550px;width:291px;height:1px;background:#d6d6d6;"></div>
<svg style="position:absolute;left:720px;top:557px;" width="28" height="26" viewBox="0 0 28 26" fill="none"><path d="M3.8 5.5 L13 7.5 L9.5 9 L12.8 12 L11.2 13.3 L8 10.3 L6.8 13.3 Z" fill="#1e88d4"/>
      <text x="3.3" y="23.5" font-family="Liberation Sans" font-size="13" font-weight="700" fill="#1e88d4">a</text>
      <text x="14" y="15.5" font-family="Liberation Sans" font-size="12" font-weight="700" fill="#3aa34a">&#12354;</text>
      <path d="M24.7 23 L15.5 21.5 L19 20 L15.8 17 L17.4 15.7 L20.6 18.7 L21.8 15.7 Z" fill="#3aa34a"/></svg>
<div style="position:absolute;top:564.25px;font-size:16.6px;line-height:1;color:#1a1a1a;font-weight:400;font-family:'Liberation Sans', sans-serif;white-space:pre;left:757.5px;">Translate</div>
<div style="position:absolute;left:753px;top:594px;width:291px;height:1px;background:#d6d6d6;"></div>
<svg style="position:absolute;left:720px;top:601px;" width="28" height="26" viewBox="0 0 28 26" fill="none"><path d="M8 4.8 H24.5 V23.3 H3.8 V17" stroke="#666" stroke-width="1.5"/>
      <path d="M10 8 H24" stroke="#555" stroke-width="1.4"/>
      <path d="M8.8 13 H14.5 V15 H20.5 V19.5 H8.8 Z" fill="#f2f2f2" stroke="#555" stroke-width="1.4"/>
      <path d="M8 1.3 H14 L10.6 7 H13.3 L3 16 L6.5 8.5 H3.6 Z" fill="#fbd38b" stroke="#e8760e" stroke-width="1.1" stroke-linejoin="round"/></svg>
<div style="position:absolute;top:607.49px;font-size:17.5px;line-height:1;color:#1a1a1a;font-weight:400;font-family:'Liberation Sans', sans-serif;white-space:pre;left:757.5px;"><u>Q</u>uick Analysis</div>
<div style="position:absolute;top:649.42px;font-size:17.1px;line-height:1;color:#1a1a1a;font-weight:400;font-family:'Liberation Sans', sans-serif;white-space:pre;left:757.5px;">Filt<u>e</u>r</div>
<svg style="position:absolute;left:1023px;top:647px;" width="11" height="16" viewBox="0 0 11 16" fill="none"><path d="M2 1.5 L8.5 8 L2 14.5" stroke="#262626" stroke-width="1.5"/></svg>
<div style="position:absolute;top:689.87px;font-size:17.4px;line-height:1;color:#1a1a1a;font-weight:400;font-family:'Liberation Sans', sans-serif;white-space:pre;left:757.5px;">S<u>o</u>rt</div>
<svg style="position:absolute;left:1023px;top:688px;" width="11" height="16" viewBox="0 0 11 16" fill="none"><path d="M2 1.5 L8.5 8 L2 14.5" stroke="#262626" stroke-width="1.5"/></svg>
<div style="position:absolute;left:753px;top:720px;width:291px;height:1px;background:#d6d6d6;"></div>
<svg style="position:absolute;left:722px;top:729px;" width="24" height="24" viewBox="0 0 24 24" fill="none"><rect x="1.5" y="1.5" width="21" height="20" fill="#fafafa" stroke="#555" stroke-width="1.4"/>
      <path d="M1.5 6.5 H22.5 M1.5 11.5 H22.5 M1.5 16.5 H22.5 M8.5 1.5 V21.5 M15.5 1.5 V21.5" stroke="#777" stroke-width="1.2"/>
      <path d="M3 4 H7 M10 4 H14 M17 4 H21" stroke="#1e88d4" stroke-width="2"/></svg>
<div style="position:absolute;top:733.40px;font-size:17.6px;line-height:1;color:#1a1a1a;font-weight:400;font-family:'Liberation Sans', sans-serif;white-space:pre;left:757.5px;"><u>G</u>et Data from Table/Range...</div>
<div style="position:absolute;left:753px;top:764px;width:291px;height:1px;background:#d6d6d6;"></div>
<svg style="position:absolute;left:720px;top:773px;" width="27" height="24" viewBox="0 0 27 24" fill="none"><path d="M4 7 V17 H6 V22 L11 17 H24 V5 H12" fill="#f6f6f6" stroke="#555" stroke-width="1.4"/>
      <path d="M6 0.5 V10 M1 5 H11" stroke="#3aa34a" stroke-width="2"/></svg>
<div style="position:absolute;top:777.63px;font-size:17.8px;line-height:1;color:#1a1a1a;font-weight:400;font-family:'Liberation Sans', sans-serif;white-space:pre;left:757.5px;">New Co<u>m</u>ment</div>
<svg style="position:absolute;left:720px;top:814px;" width="27" height="24" viewBox="0 0 27 24" fill="none"><path d="M5 8 V22 H17 L23 16 V4 H12" fill="#f6f6f6" stroke="#555" stroke-width="1.4"/>
      <path d="M17 22 V16 H23" stroke="#555" stroke-width="1.4"/>
      <path d="M6 0.5 V10 M1 5 H11" stroke="#3aa34a" stroke-width="2"/></svg>
<div style="position:absolute;top:818.80px;font-size:17.6px;line-height:1;color:#1a1a1a;font-weight:400;font-family:'Liberation Sans', sans-serif;white-space:pre;left:757.5px;"><u>N</u>ew Note</div>
<svg style="position:absolute;left:724px;top:858px;" width="20" height="24" viewBox="0 0 20 24" fill="none"><rect x="1.5" y="1.5" width="17" height="21" fill="#f4f4f4" stroke="#555" stroke-width="1.5"/>
      <rect x="4" y="6" width="3" height="3" fill="#777"/><path d="M9 7.5 H15" stroke="#777" stroke-width="1.3"/>
      <rect x="4" y="12" width="3" height="3" fill="#777"/><path d="M9 13.5 H15" stroke="#777" stroke-width="1.3"/></svg>
<div style="position:absolute;top:863.28px;font-size:16.8px;line-height:1;color:#1a1a1a;font-weight:400;font-family:'Liberation Sans', sans-serif;white-space:pre;left:757.5px;"><u>F</u>ormat Cells...</div>
<div style="position:absolute;top:903.20px;font-size:17.6px;line-height:1;color:#1a1a1a;font-weight:400;font-family:'Liberation Sans', sans-serif;white-space:pre;left:757.5px;">Pic<u>k</u> From Drop-down List...</div>
<div style="position:absolute;top:945.21px;font-size:17.0px;line-height:1;color:#1a1a1a;font-weight:400;font-family:'Liberation Sans', sans-serif;white-space:pre;left:757.5px;">Define N<u>a</u>me...</div>
<div style="position:absolute;left:753px;top:975px;width:291px;height:1px;background:#d6d6d6;"></div>
<svg style="position:absolute;left:721px;top:988px;" width="26" height="14" viewBox="0 0 26 14" fill="none"><path d="M10 9 H7 Q2.5 9 2.5 5.5 Q2.5 2 7 2 H9.5 Q13.5 2 13.5 5.5 Q13.5 8 11 9" stroke="#444" stroke-width="1.5"/><path d="M16 4.5 Q21 4.5 21 8.5 Q21 12 17 12 H14.5 Q10.5 12 10.5 8.5 Q10.5 6.5 12.5 5.5" stroke="#444" stroke-width="1.5"/></svg>
<div style="position:absolute;top:989.10px;font-size:17.6px;line-height:1;color:#1a1a1a;font-weight:400;font-family:'Liberation Sans', sans-serif;white-space:pre;left:757.5px;">Link</div>
<div style="position:absolute;left:1010px;top:988px;width:1px;height:12px;background:#d6d6d6;"></div>
<svg style="position:absolute;left:1023px;top:988px;" width="11" height="16" viewBox="0 0 11 16" fill="none"><path d="M2 1.5 L8.5 8 L2 14.5" stroke="#262626" stroke-width="1.5"/></svg>
<div style="position:absolute;left:707.5px;top:999.5px;width:337px;height:20px;box-sizing:border-box;border:1px solid #a5a5a5;background:#fff;"></div>
<svg style="position:absolute;left:869.5px;top:1006.5px;" width="11.0" height="7.0" viewBox="0 0 11.0 7.0" fill="none"><path d="M2 1.75 L5.5 5.25 L9.0 1.75" stroke="#333" stroke-width="1.3"/></svg>
<div style="position:absolute;left:705.5px;top:847px;width:341px;height:54px;box-sizing:border-box;border:6.3px solid #e61e26;"></div>
<div style="position:absolute;left:711.5px;top:10px;width:517px;height:52px;box-sizing:border-box;border:1px solid #e3e3e3;border-radius:6px;background:#f7f7f7;box-shadow:0 1px 2px rgba(0,0,0,0.10);"></div>
<div style="position:absolute;left:705px;top:19px;width:394.5px;height:79.5px;box-sizing:border-box;border:1.3px solid #666;border-radius:7px;background:#fff;box-shadow:0 3px 7px rgba(0,0,0,0.2);"></div>
<div style="position:absolute;left:712px;top:24px;width:89px;height:36px;box-sizing:border-box;border:1px solid #8f8f8f;border-radius:5px;background:#fff;"></div>
<div style="position:absolute;top:34.78px;font-size:16.8px;line-height:1;color:#262626;font-weight:400;font-family:'Liberation Sans', sans-serif;white-space:pre;left:715.5px;">Sylfaen</div>
<svg style="position:absolute;left:786px;top:38.5px;" width="12" height="8" viewBox="0 0 12 8" fill="none"><path d="M2 2.0 L6 6.0 L10 2.0" stroke="#333" stroke-width="1.5"/></svg>
<div style="position:absolute;left:803px;top:24px;width:67px;height:36px;box-sizing:border-box;border:1px solid #8f8f8f;border-radius:5px;background:#fff;"></div>
<div style="position:absolute;top:34.78px;font-size:16.8px;line-height:1;color:#262626;font-weight:400;font-family:'Liberation Sans', sans-serif;white-space:pre;left:807px;">14</div>
<svg style="position:absolute;left:855px;top:38.5px;" width="12" height="8" viewBox="0 0 12 8" fill="none"><path d="M2 2.0 L6 6.0 L10 2.0" stroke="#333" stroke-width="1.5"/></svg>
<div style="position:absolute;top:32.22px;font-size:21px;line-height:1;color:#444;font-weight:400;font-family:'Liberation Sans', sans-serif;white-space:pre;left:878px;">A</div>
<svg style="position:absolute;left:893px;top:30px;" width="10" height="8" viewBox="0 0 10 8" fill="none"><path d="M1.5 6 L5 2.5 L8.5 6" stroke="#1e88d4" stroke-width="1.6"/></svg>
<div style="position:absolute;top:35.61px;font-size:17px;line-height:1;color:#444;font-weight:400;font-family:'Liberation Sans', sans-serif;white-space:pre;left:914px;">A</div>
<svg style="position:absolute;left:926px;top:30px;" width="10" height="8" viewBox="0 0 10 8" fill="none"><path d="M1.5 2 L5 5.5 L8.5 2" stroke="#1e88d4" stroke-width="1.6"/></svg>
<svg style="position:absolute;left:944px;top:33px;" width="26" height="22" viewBox="0 0 26 22" fill="none"><rect x="1" y="2" width="21" height="13" stroke="#555" stroke-width="1.4"/>
      <path d="M5 5 H4 V12 H5 M18 5 H19 V12 H18" stroke="#555" stroke-width="1.2"/>
      <circle cx="11.5" cy="8.5" r="3.3" stroke="#555" stroke-width="1.3"/>
      <ellipse cx="19" cy="13" rx="5" ry="2" fill="#fbe0b8" stroke="#e8871e" stroke-width="1.3"/>
      <path d="M14 13 V19.5 Q19 22 24 19.5 V13 M14 16.3 Q19 18.5 24 16.3" stroke="#e8871e" stroke-width="1.3"/></svg>
<svg style="position:absolute;left:975px;top:38.5px;" width="12" height="8" viewBox="0 0 12 8" fill="none"><path d="M2 2.0 L6 6.0 L10 2.0" stroke="#333" stroke-width="1.5"/></svg>
<div style="position:absolute;top:29.68px;font-size:24px;line-height:1;color:#444;font-weight:400;font-family:'Liberation Sans', sans-serif;white-space:pre;left:999px;">%</div>
<svg style="position:absolute;left:1037px;top:32px;" width="16" height="20" viewBox="0 0 16 20" fill="none"><path d="M8 2 Q13.5 2 13.5 8 Q13.5 15 5 19" stroke="#333" stroke-width="3"/><circle cx="7.5" cy="6.5" r="4.5" fill="#333"/></svg>
<svg style="position:absolute;left:1067px;top:30px;" width="23" height="22" viewBox="0 0 23 22" fill="none"><rect x="1.5" y="1.5" width="20" height="19" stroke="#777" stroke-width="1.6"/>
      <path d="M1.5 5 H21.5 M1.5 17 H21.5" stroke="#777" stroke-width="1.3"/>
      <rect x="1.5" y="5" width="20" height="12" stroke="#1e88d4" stroke-width="1.6"/>
      <path d="M5 11 H18 M8 8.5 L5 11 L8 13.5 M15 8.5 L18 11 L15 13.5" stroke="#1e88d4" stroke-width="1.3"/></svg>
<div style="position:absolute;left:712px;top:60.5px;width:32px;height:33px;box-sizing:border-box;border:1px solid #9a9a9a;border-radius:5px;background:#ebebeb;"></div>
<div style="position:absolute;top:68.92px;font-size:19px;line-height:1;color:#333;font-weight:700;font-family:'Liberation Sans', sans-serif;white-space:pre;left:712.00px;width:32px;text-align:center;">B</div>
<div style="position:absolute;top:68.25px;font-size:20px;line-height:1;color:#444;font-weight:400;font-family:'Liberation Serif', serif;white-space:pre;font-style:italic;left:752.00px;width:20px;text-align:center;">I</div>
<div style="position:absolute;left:780px;top:61px;width:32px;height:32.5px;box-sizing:border-box;border:1px solid #9a9a9a;border-radius:5px;background:#ebebeb;"></div>
<div style="position:absolute;left:785px;top:66.5px;width:22px;height:1.6px;background:#555;"></div>
<div style="position:absolute;left:788px;top:70.8px;width:16px;height:1.6px;background:#555;"></div>
<div style="position:absolute;left:785px;top:75.1px;width:22px;height:1.6px;background:#555;"></div>
<div style="position:absolute;left:788px;top:79.4px;width:16px;height:1.6px;background:#555;"></div>
<div style="position:absolute;left:785px;top:83.7px;width:22px;height:1.6px;background:#555;"></div>
<svg style="position:absolute;left:818px;top:64px;" width="26" height="24" viewBox="0 0 26 24" fill="none"><path d="M8 3 L4 11 L11 17 L17 10 Z" fill="#fff" stroke="#444" stroke-width="1.3"/>
      <path d="M8 3 V8" stroke="#444" stroke-width="1.3"/><path d="M16 7 Q20 6 20 13" stroke="#1e66b8" stroke-width="2.2"/></svg>
<div style="position:absolute;left:818px;top:83px;width:24px;height:5.8px;background:#ffff00;"></div>
<svg style="position:absolute;left:849px;top:73px;" width="12" height="8" viewBox="0 0 12 8" fill="none"><path d="M2 2.0 L6 6.0 L10 2.0" stroke="#333" stroke-width="1.5"/></svg>
<div style="position:absolute;top:64.07px;font-size:20px;line-height:1;color:#444;font-weight:400;font-family:'Liberation Sans', sans-serif;white-space:pre;left:873.00px;width:24px;text-align:center;">A</div>
<div style="position:absolute;left:873px;top:83px;width:24px;height:5.8px;background:#ff0000;"></div>
<svg style="position:absolute;left:904px;top:73px;" width="12" height="8" viewBox="0 0 12 8" fill="none"><path d="M2 2.0 L6 6.0 L10 2.0" stroke="#333" stroke-width="1.5"/></svg>
<svg style="position:absolute;left:928px;top:65px;" width="23" height="23" viewBox="0 0 23 23" fill="none"><rect x="1" y="1" width="21" height="20" stroke="#888" stroke-width="1.2" stroke-dasharray="2 1.5"/><path d="M11.5 1 V21 M1 11 H22" stroke="#888" stroke-width="1.2" stroke-dasharray="2 1.5"/><path d="M1 21.5 H22" stroke="#666" stroke-width="1.6"/></svg>
<svg style="position:absolute;left:959px;top:73px;" width="12" height="8" viewBox="0 0 12 8" fill="none"><path d="M2 2.0 L6 6.0 L10 2.0" stroke="#333" stroke-width="1.5"/></svg>
<div style="position:absolute;top:59.73px;font-size:14.5px;line-height:1;color:#333;font-weight:400;font-family:'Liberation Sans', sans-serif;white-space:pre;left:993px;">.0</div>
<div style="position:absolute;top:75.73px;font-size:14.5px;line-height:1;color:#333;font-weight:400;font-family:'Liberation Sans', sans-serif;white-space:pre;left:990px;">.00</div>
<svg style="position:absolute;left:984px;top:63px;" width="14" height="10" viewBox="0 0 14 10" fill="none"><path d="M13 5 H2 M5.5 1.5 L2 5 L5.5 8.5" stroke="#1e88d4" stroke-width="1.5"/></svg>
<div style="position:absolute;top:59.73px;font-size:14.5px;line-height:1;color:#333;font-weight:400;font-family:'Liberation Sans', sans-serif;white-space:pre;left:1021px;">.00</div>
<div style="position:absolute;top:75.73px;font-size:14.5px;line-height:1;color:#333;font-weight:400;font-family:'Liberation Sans', sans-serif;white-space:pre;left:1030px;">.0</div>
<svg style="position:absolute;left:1017px;top:77px;" width="14" height="10" viewBox="0 0 14 10" fill="none"><path d="M1 5 H12 M8.5 1.5 L12 5 L8.5 8.5" stroke="#1e88d4" stroke-width="1.5"/></svg>
<svg style="position:absolute;left:1052px;top:66px;" width="24" height="22" viewBox="0 0 24 22" fill="none"><path d="M1 10 L13 7 L16 12 L7 21 Z" fill="#f9c98c" stroke="#e8871e" stroke-width="1.5" stroke-linejoin="round"/>
      <path d="M4 12 L14 10" stroke="#e8871e" stroke-width="1"/>
      <path d="M13 9 L19 3.5 L22 6.5 L16 12" fill="#fff" stroke="#555" stroke-width="1.4"/></svg></body></html>
